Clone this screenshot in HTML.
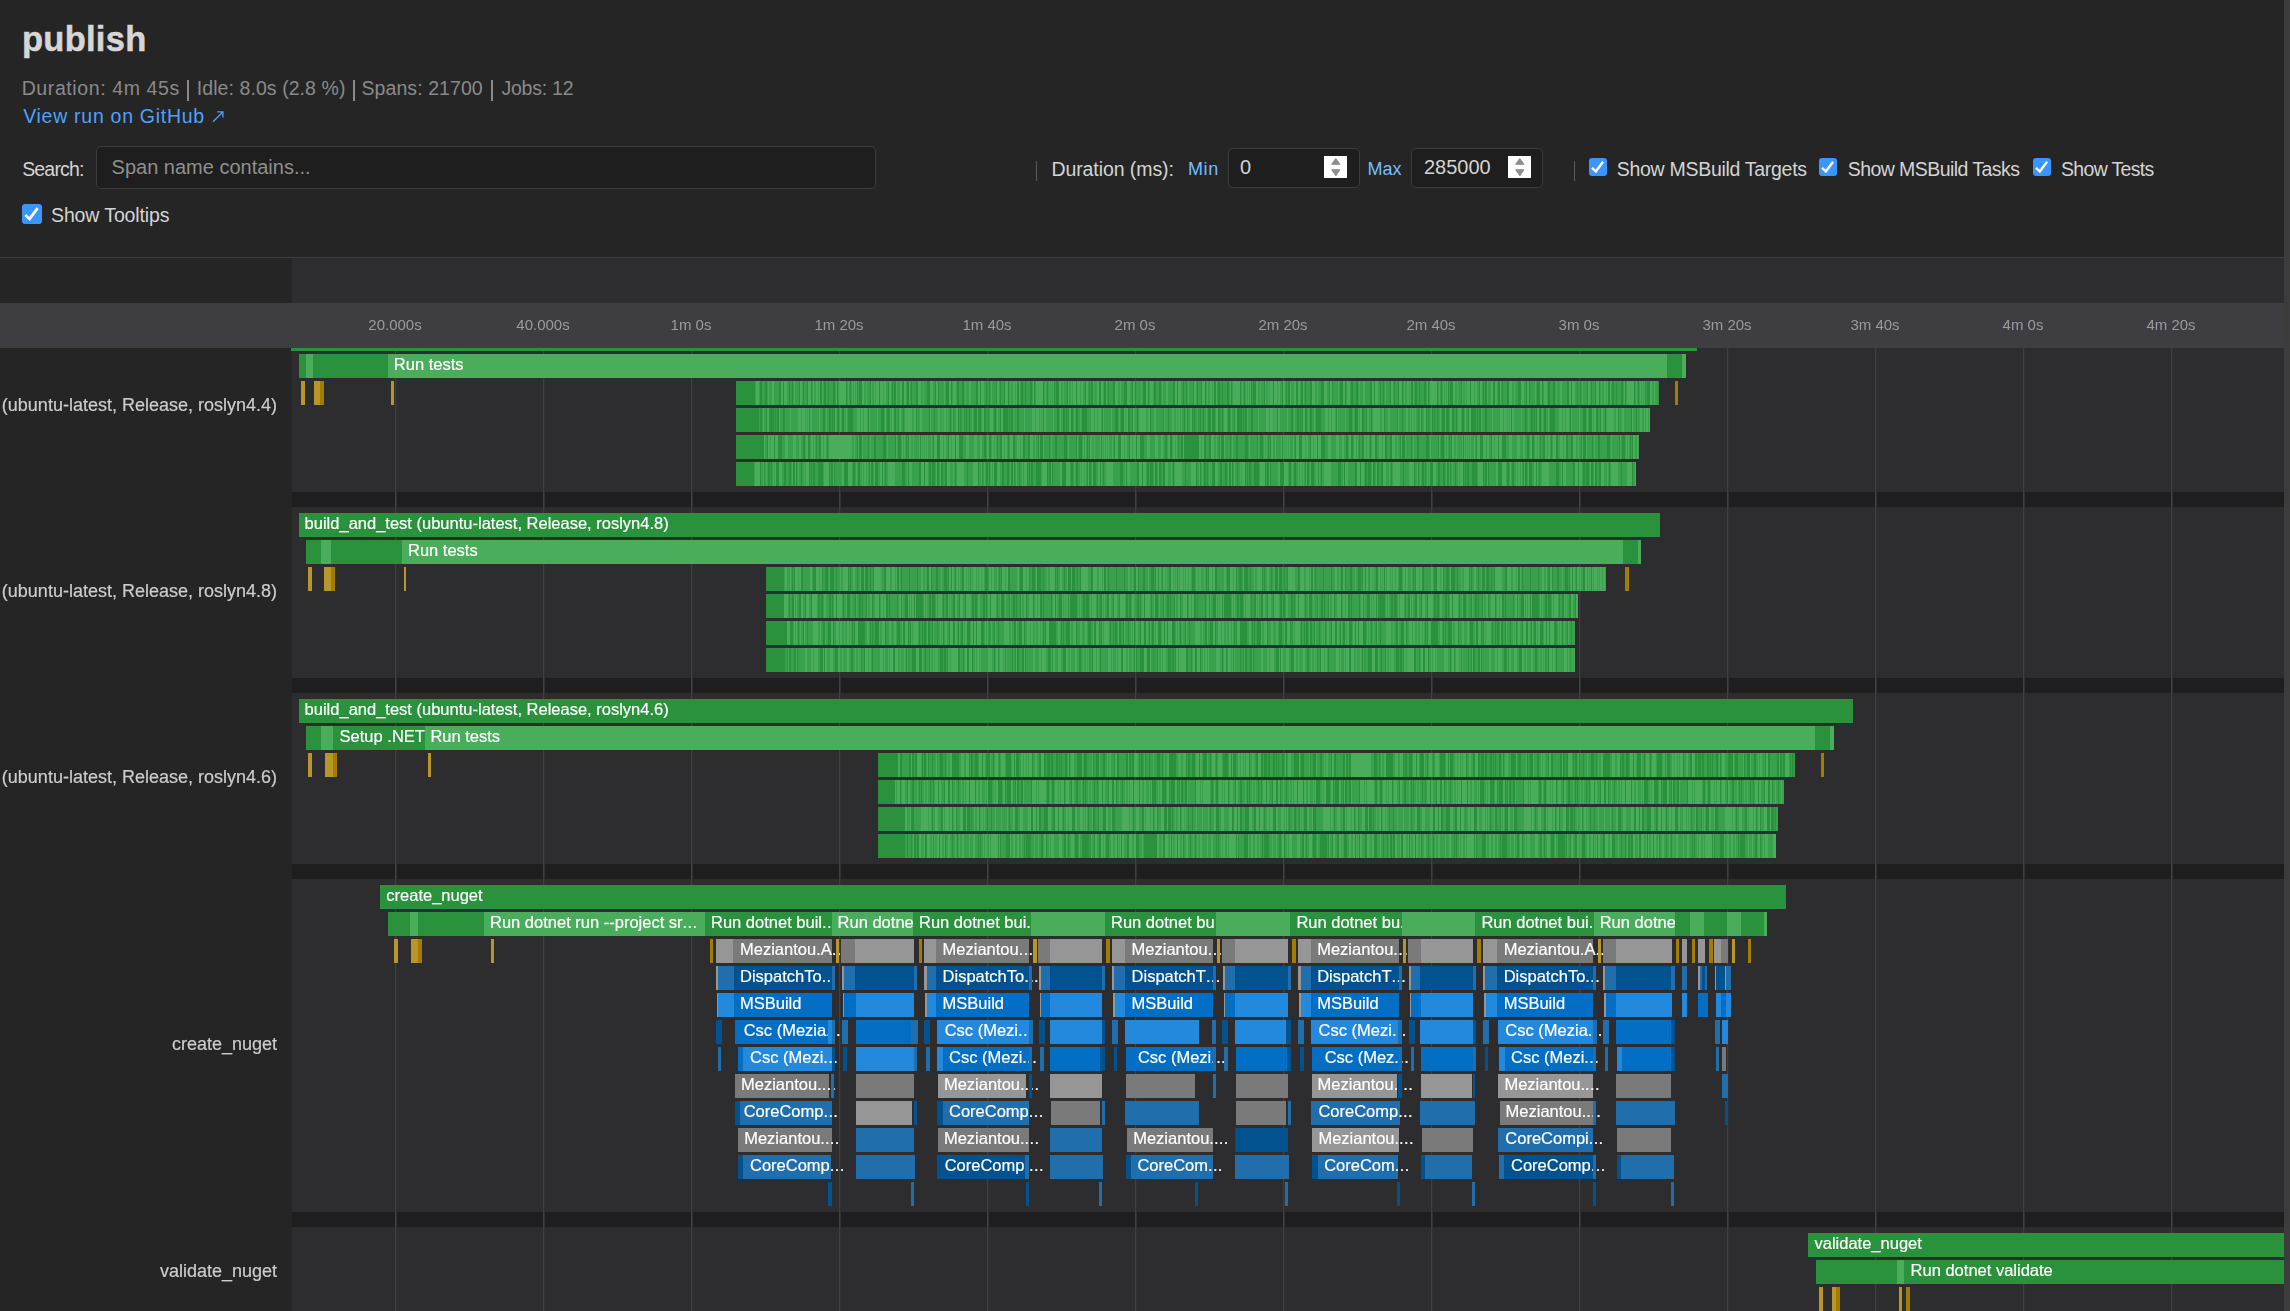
<!DOCTYPE html>
<html><head><meta charset="utf-8"><title>publish</title>
<style>

html,body{margin:0;padding:0}
html{background:#252526}
body{width:2290px;height:1311px;position:relative;background:#252526;
 font-family:"Liberation Sans",sans-serif;color:#d4d4d4}
#root{position:absolute;left:0;top:0;width:2290px;height:1311px;overflow:hidden;background:#252526}
.a{position:absolute;white-space:nowrap}
.t{position:absolute;white-space:nowrap;line-height:1;}
.b{position:absolute;height:24px}
.l{position:absolute;top:0;white-space:nowrap;color:#fff;font-size:16.5px;line-height:21px;height:24px;-webkit-text-stroke:0.2px #fff}
.l s{text-decoration:none;letter-spacing:0.35px}
.ax{position:absolute;top:303px;height:45px;line-height:44px;font-size:15px;color:#9b9b97;width:100px;text-align:center}
.g{position:absolute;top:348px;width:1px;height:963px;background:#3f3f44;box-shadow:1px 0 0 #313135}
.ll{position:absolute;right:2013px;white-space:nowrap;font-size:18px;color:#cccccc;line-height:20px;-webkit-text-stroke:0.2px #ccc}
.cb{position:absolute;background:#3a96ff;border-radius:3px}
.inp{position:absolute;box-sizing:border-box;background:#1e1e1e;border:1px solid #3c3c40;border-radius:5px}
.sp{position:absolute;background:#fdfdfd;width:23px;height:22px}

</style></head><body><div id="root">
<div class="t" id="h1" style="left:22.00px;top:22.10px;font-size:34.5px;color:#d6d6d6;font-weight:bold;letter-spacing:0.266px;-webkit-text-stroke:0.5px #d6d6d6">publish</div>
<div class="t" id="s1" style="left:21.70px;top:78.99px;font-size:19.5px;color:#8a8a8a;font-weight:normal;letter-spacing:0.600px">Duration: 4m 45s</div>
<div class="t" id="s2" style="left:196.80px;top:78.99px;font-size:19.5px;color:#8a8a8a;font-weight:normal;letter-spacing:0.071px">Idle: 8.0s (2.8 %)</div>
<div class="t" id="s3" style="left:361.50px;top:78.99px;font-size:19.5px;color:#8a8a8a;font-weight:normal;letter-spacing:0.072px">Spans: 21700</div>
<div class="t" id="s4" style="left:501.40px;top:78.99px;font-size:19.5px;color:#8a8a8a;font-weight:normal;letter-spacing:-0.229px">Jobs: 12</div>
<div class="t" id="lnk" style="left:23.20px;top:106.99px;font-size:19.5px;color:#4ea1ff;font-weight:normal;letter-spacing:0.717px">View run on GitHub</div>
<div class="t" id="srch" style="left:22.20px;top:159.79px;font-size:19.5px;color:#d4d4d4;font-weight:normal;letter-spacing:-0.833px">Search:</div>
<div class="t" id="tt" style="left:51.00px;top:206.09px;font-size:19.5px;color:#d4d4d4;font-weight:normal;letter-spacing:-0.117px">Show Tooltips</div>
<div class="t" id="dur" style="left:1051.40px;top:160.49px;font-size:19.5px;color:#d4d4d4;font-weight:normal;letter-spacing:-0.077px">Duration (ms):</div>
<div class="t" id="min" style="left:1187.90px;top:159.76px;font-size:18.0px;color:#75beff;font-weight:normal;letter-spacing:0.700px">Min</div>
<div class="t" id="max" style="left:1367.50px;top:159.76px;font-size:18.0px;color:#75beff;font-weight:normal;letter-spacing:0.000px">Max</div>
<div class="t" id="tg" style="left:1616.80px;top:160.29px;font-size:19.5px;color:#d4d4d4;font-weight:normal;letter-spacing:-0.294px">Show MSBuild Targets</div>
<div class="t" id="tk" style="left:1847.70px;top:160.29px;font-size:19.5px;color:#d4d4d4;font-weight:normal;letter-spacing:-0.553px">Show MSBuild Tasks</div>
<div class="t" id="ts" style="left:2061.00px;top:160.29px;font-size:19.5px;color:#d4d4d4;font-weight:normal;letter-spacing:-0.667px">Show Tests</div>
<div class="a" style="left:187.1px;top:79.5px;width:1.5px;height:21px;background:#8a8a8a"></div>
<div class="a" style="left:353.4px;top:79.5px;width:1.5px;height:21px;background:#8a8a8a"></div>
<div class="a" style="left:491.1px;top:79.5px;width:1.5px;height:21px;background:#8a8a8a"></div>
<svg class="a" style="left:210px;top:108px" width="18" height="18" viewBox="0 0 18 18"><path d="M3 13.8 L12.6 4.2 M7.2 3.9 H12.9 V9.6" stroke="#4ea1ff" stroke-width="1.3" fill="none"/></svg>
<div class="inp" style="left:96px;top:146px;width:780px;height:43px"></div>
<div class="t" id="ph" style="left:111.6px;top:156.57px;font-size:20px;color:#8f8f8f">Span name contains...</div>
<div class="a" style="left:1036px;top:161px;width:1px;height:20px;background:#5a5a5a"></div>
<div class="a" style="left:1574px;top:161px;width:1px;height:20px;background:#5a5a5a"></div>
<div class="inp" style="left:1228px;top:148px;width:132px;height:40px"></div>
<div class="inp" style="left:1411px;top:148px;width:132px;height:40px"></div>
<div class="t" style="left:1240px;top:157.07px;font-size:20px;color:#d4d4d4">0</div>
<div class="t" style="left:1424px;top:157.07px;font-size:20px;color:#d4d4d4">285000</div>
<div class="sp" style="left:1324px;top:156px"></div>
<svg class="a" style="left:1324px;top:156px" width="23" height="22" viewBox="0 0 23 22"><path d="M8 8.2 L11.8 2.9 L15.6 8.2 Z M8 13.8 L11.8 19.4 L15.6 13.8 Z" fill="#8c8c8c" stroke="#8c8c8c" stroke-width="1.2" stroke-linejoin="round"/></svg>
<div class="sp" style="left:1508px;top:156px"></div>
<svg class="a" style="left:1508px;top:156px" width="23" height="22" viewBox="0 0 23 22"><path d="M8 8.2 L11.8 2.9 L15.6 8.2 Z M8 13.8 L11.8 19.4 L15.6 13.8 Z" fill="#8c8c8c" stroke="#8c8c8c" stroke-width="1.2" stroke-linejoin="round"/></svg>
<div class="cb" style="left:22px;top:204px;width:20px;height:20px"></div>
<svg class="a" style="left:22px;top:204px" width="20" height="20" viewBox="0 0 20 20"><path d="M3.3 10.9 L7.6 14.9 L15.6 4.1" stroke="#fff" stroke-width="2.7" fill="none"/></svg>
<div class="cb" style="left:1589px;top:158px;width:18px;height:18px"></div>
<svg class="a" style="left:1589px;top:158px" width="18" height="18" viewBox="0 0 20 20"><path d="M3.3 10.9 L7.6 14.9 L15.6 4.1" stroke="#fff" stroke-width="2.7" fill="none"/></svg>
<div class="cb" style="left:1819px;top:158px;width:18px;height:18px"></div>
<svg class="a" style="left:1819px;top:158px" width="18" height="18" viewBox="0 0 20 20"><path d="M3.3 10.9 L7.6 14.9 L15.6 4.1" stroke="#fff" stroke-width="2.7" fill="none"/></svg>
<div class="cb" style="left:2033px;top:158px;width:18px;height:18px"></div>
<svg class="a" style="left:2033px;top:158px" width="18" height="18" viewBox="0 0 20 20"><path d="M3.3 10.9 L7.6 14.9 L15.6 4.1" stroke="#fff" stroke-width="2.7" fill="none"/></svg>
<div class="a" style="left:0;top:257px;width:2284px;height:1px;background:#3e3e42"></div>
<div class="a" style="left:292px;top:258px;width:1992px;height:1053px;background:#2d2d30"></div>
<div class="a" style="left:0;top:303px;width:2284px;height:45px;background:#3e3e42"></div>
<div class="a" style="left:292px;top:492px;width:1992px;height:15px;background:#1e1e1e"></div>
<div class="a" style="left:292px;top:678px;width:1992px;height:15px;background:#1e1e1e"></div>
<div class="a" style="left:292px;top:864px;width:1992px;height:15px;background:#1e1e1e"></div>
<div class="a" style="left:292px;top:1212px;width:1992px;height:15px;background:#1e1e1e"></div>
<div class="g" style="left:395px"></div>
<div class="g" style="left:543px"></div>
<div class="g" style="left:691px"></div>
<div class="g" style="left:839px"></div>
<div class="g" style="left:987px"></div>
<div class="g" style="left:1135px"></div>
<div class="g" style="left:1283px"></div>
<div class="g" style="left:1431px"></div>
<div class="g" style="left:1579px"></div>
<div class="g" style="left:1727px"></div>
<div class="g" style="left:1875px"></div>
<div class="g" style="left:2023px"></div>
<div class="g" style="left:2171px"></div>
<div style="position:absolute;left:0;top:0;width:2290px;height:1311px;will-change:transform">
<div class="ax" style="left:345px">20.000s</div>
<div class="ax" style="left:493px">40.000s</div>
<div class="ax" style="left:641px">1m 0s</div>
<div class="ax" style="left:789px">1m 20s</div>
<div class="ax" style="left:937px">1m 40s</div>
<div class="ax" style="left:1085px">2m 0s</div>
<div class="ax" style="left:1233px">2m 20s</div>
<div class="ax" style="left:1381px">2m 40s</div>
<div class="ax" style="left:1529px">3m 0s</div>
<div class="ax" style="left:1677px">3m 20s</div>
<div class="ax" style="left:1825px">3m 40s</div>
<div class="ax" style="left:1973px">4m 0s</div>
<div class="ax" style="left:2121px">4m 20s</div>
<div class="a" style="left:2284px;top:0;width:6px;height:1311px;background:#3c3c3d"></div>
<div class="ll" style="top:394.5px">(ubuntu-latest, Release, roslyn4.4)</div>
<div class="ll" style="top:581.4px">(ubuntu-latest, Release, roslyn4.8)</div>
<div class="ll" style="top:767.4px">(ubuntu-latest, Release, roslyn4.6)</div>
<div class="ll" style="top:1034.3px">create_nuget</div>
<div class="ll" style="top:1260.9px">validate_nuget</div>
</div>
<div id="bars" style="position:absolute;left:0;top:0;width:2290px;height:1311px;will-change:transform">
<div class="b" style="left:299px;top:354px;width:7px;background:#2a923d"></div>
<div class="b" style="left:306px;top:354px;width:7px;background:#4aad5c"></div>
<div class="b" style="left:313px;top:354px;width:75px;background:#2a923d"></div>
<div class="b" style="left:388px;top:354px;width:1279px;background:#4aad5c"><span class="l" style="left:5.8px">Run tests</span></div>
<div class="b" style="left:1667px;top:354px;width:15px;background:#2a923d"></div>
<div class="b" style="left:1682px;top:354px;width:4px;background:#4aad5c"></div>
<div class="b" style="left:301px;top:381px;width:4px;background:#b8962a"></div>
<div class="b" style="left:314px;top:381px;width:6px;background:#b8962a"></div>
<div class="b" style="left:320px;top:381px;width:4px;background:#a27d00"></div>
<div class="b" style="left:391px;top:381px;width:3px;background:#b8962a"></div>
<div class="b" style="left:736px;top:381px;width:19px;background:#2a923d"></div>
<div class="b" style="left:755px;top:381px;width:904px;background:repeating-linear-gradient(90deg,#39a04c 0px,#39a04c 1px,#4aad5c 1px,#4aad5c 4px,#39a04c 4px,#39a04c 5px,#2a923d 5px,#2a923d 7px,#39a04c 7px,#39a04c 10px,#2a923d 10px,#2a923d 12px,#39a04c 12px,#39a04c 13px,#4aad5c 13px,#4aad5c 14px,#39a04c 14px,#39a04c 17px,#4aad5c 17px,#4aad5c 19px,#39a04c 19px,#39a04c 24px,#2a923d 24px,#2a923d 26px,#4aad5c 26px,#4aad5c 28px,#2a923d 28px,#2a923d 29px,#4aad5c 29px,#4aad5c 32px,#39a04c 32px,#39a04c 34px,#2a923d 34px,#2a923d 35px,#39a04c 35px,#39a04c 37px,#2a923d 37px,#2a923d 38px,#39a04c 38px,#39a04c 39px,#4aad5c 39px,#4aad5c 40px,#39a04c 40px,#39a04c 44px,#2a923d 44px,#2a923d 45px,#4aad5c 45px,#4aad5c 47px,#39a04c 47px,#39a04c 48px,#2a923d 48px,#2a923d 49px,#39a04c 49px,#39a04c 52px,#2a923d 52px,#2a923d 53px,#4aad5c 53px,#4aad5c 56px,#2a923d 56px,#2a923d 57px,#39a04c 57px,#39a04c 58px,#4aad5c 58px,#4aad5c 59px,#39a04c 59px,#39a04c 61px,#4aad5c 61px,#4aad5c 63px,#39a04c 63px,#39a04c 64px,#4aad5c 64px,#4aad5c 65px,#2a923d 65px,#2a923d 67px,#4aad5c 67px,#4aad5c 68px,#39a04c 68px,#39a04c 69px,#2a923d 69px,#2a923d 71px,#39a04c 71px,#39a04c 73px,#2a923d 73px,#2a923d 74px,#39a04c 74px,#39a04c 78px,#2a923d 78px,#2a923d 80px,#39a04c 80px,#39a04c 81px,#4aad5c 81px,#4aad5c 82px,#2a923d 82px,#2a923d 83px,#39a04c 83px,#39a04c 84px,#4aad5c 84px,#4aad5c 91px,#2a923d 91px,#2a923d 92px,#39a04c 92px,#39a04c 93px,#4aad5c 93px,#4aad5c 94px,#39a04c 94px,#39a04c 95px,#2a923d 95px,#2a923d 96px,#39a04c 96px,#39a04c 97px,#4aad5c 97px,#4aad5c 98px,#39a04c 98px,#39a04c 99px,#4aad5c 99px,#4aad5c 100px,#39a04c 100px,#39a04c 101px,#4aad5c 101px,#4aad5c 102px,#2a923d 102px,#2a923d 103px,#39a04c 103px,#39a04c 104px,#2a923d 104px,#2a923d 107px,#4aad5c 107px,#4aad5c 109px,#39a04c 109px,#39a04c 111px,#4aad5c 111px,#4aad5c 112px,#39a04c 112px,#39a04c 115px,#2a923d 115px,#2a923d 116px,#4aad5c 116px,#4aad5c 117px,#39a04c 117px,#39a04c 119px,#4aad5c 119px,#4aad5c 120px,#39a04c 120px,#39a04c 121px,#4aad5c 121px,#4aad5c 124px,#2a923d 124px,#2a923d 125px,#4aad5c 125px,#4aad5c 128px,#39a04c 128px,#39a04c 129px,#4aad5c 129px,#4aad5c 131px,#39a04c 131px,#39a04c 133px,#2a923d 133px,#2a923d 134px,#4aad5c 134px,#4aad5c 136px,#39a04c 136px,#39a04c 137px,#2a923d 137px,#2a923d 138px,#39a04c 138px,#39a04c 139px,#2a923d 139px,#2a923d 141px,#4aad5c 141px,#4aad5c 142px,#39a04c 142px,#39a04c 145px,#4aad5c 145px,#4aad5c 147px,#2a923d 147px,#2a923d 149px,#4aad5c 149px,#4aad5c 151px,#39a04c 151px,#39a04c 152px,#2a923d 152px,#2a923d 154px,#4aad5c 154px,#4aad5c 155px,#39a04c 155px,#39a04c 156px,#2a923d 156px,#2a923d 157px,#39a04c 157px,#39a04c 161px,#2a923d 161px,#2a923d 163px,#4aad5c 163px,#4aad5c 166px,#39a04c 166px,#39a04c 168px,#4aad5c 168px,#4aad5c 169px,#39a04c 169px,#39a04c 172px,#2a923d 172px,#2a923d 175px,#4aad5c 175px,#4aad5c 178px,#39a04c 178px,#39a04c 180px,#2a923d 180px,#2a923d 181px,#4aad5c 181px,#4aad5c 183px,#2a923d 183px,#2a923d 184px,#39a04c 184px,#39a04c 189px,#4aad5c 189px,#4aad5c 190px,#39a04c 190px,#39a04c 191px,#2a923d 191px,#2a923d 194px,#4aad5c 194px,#4aad5c 196px,#2a923d 196px,#2a923d 197px)"></div>
<div class="b" style="left:1675px;top:381px;width:3px;background:#a27d00"></div>
<div class="b" style="left:736px;top:408px;width:23px;background:#2a923d"></div>
<div class="b" style="left:759px;top:408px;width:891px;background:repeating-linear-gradient(90deg,#39a04c 0px,#39a04c 1px,#2a923d 1px,#2a923d 3px,#39a04c 3px,#39a04c 4px,#4aad5c 4px,#4aad5c 5px,#39a04c 5px,#39a04c 7px,#2a923d 7px,#2a923d 8px,#4aad5c 8px,#4aad5c 10px,#2a923d 10px,#2a923d 15px,#39a04c 15px,#39a04c 16px,#2a923d 16px,#2a923d 17px,#39a04c 17px,#39a04c 18px,#2a923d 18px,#2a923d 20px,#4aad5c 20px,#4aad5c 21px,#39a04c 21px,#39a04c 24px,#2a923d 24px,#2a923d 26px,#39a04c 26px,#39a04c 31px,#4aad5c 31px,#4aad5c 32px,#39a04c 32px,#39a04c 39px,#4aad5c 39px,#4aad5c 42px,#39a04c 42px,#39a04c 43px,#4aad5c 43px,#4aad5c 46px,#39a04c 46px,#39a04c 47px,#4aad5c 47px,#4aad5c 48px,#39a04c 48px,#39a04c 49px,#4aad5c 49px,#4aad5c 50px,#2a923d 50px,#2a923d 51px,#4aad5c 51px,#4aad5c 53px,#39a04c 53px,#39a04c 60px,#4aad5c 60px,#4aad5c 61px,#39a04c 61px,#39a04c 64px,#2a923d 64px,#2a923d 66px,#39a04c 66px,#39a04c 67px,#4aad5c 67px,#4aad5c 68px,#39a04c 68px,#39a04c 70px,#2a923d 70px,#2a923d 72px,#39a04c 72px,#39a04c 73px,#2a923d 73px,#2a923d 74px,#39a04c 74px,#39a04c 75px,#2a923d 75px,#2a923d 76px,#4aad5c 76px,#4aad5c 78px,#2a923d 78px,#2a923d 80px,#39a04c 80px,#39a04c 81px,#4aad5c 81px,#4aad5c 82px,#39a04c 82px,#39a04c 83px,#2a923d 83px,#2a923d 85px,#39a04c 85px,#39a04c 87px,#4aad5c 87px,#4aad5c 88px,#39a04c 88px,#39a04c 89px,#2a923d 89px,#2a923d 94px,#39a04c 94px,#39a04c 98px,#4aad5c 98px,#4aad5c 101px,#39a04c 101px,#39a04c 102px,#4aad5c 102px,#4aad5c 104px,#39a04c 104px,#39a04c 105px,#4aad5c 105px,#4aad5c 108px,#39a04c 108px,#39a04c 109px,#2a923d 109px,#2a923d 110px,#4aad5c 110px,#4aad5c 111px,#39a04c 111px,#39a04c 118px,#4aad5c 118px,#4aad5c 119px,#39a04c 119px,#39a04c 122px,#2a923d 122px,#2a923d 125px,#39a04c 125px,#39a04c 126px,#4aad5c 126px,#4aad5c 127px,#39a04c 127px,#39a04c 128px,#2a923d 128px,#2a923d 131px,#4aad5c 131px,#4aad5c 132px,#39a04c 132px,#39a04c 133px,#4aad5c 133px,#4aad5c 135px,#2a923d 135px,#2a923d 137px,#39a04c 137px,#39a04c 139px,#2a923d 139px,#2a923d 140px,#4aad5c 140px,#4aad5c 142px,#39a04c 142px,#39a04c 144px,#2a923d 144px,#2a923d 145px,#39a04c 145px,#39a04c 146px,#4aad5c 146px,#4aad5c 153px,#39a04c 153px,#39a04c 155px,#4aad5c 155px,#4aad5c 157px,#2a923d 157px,#2a923d 158px,#39a04c 158px,#39a04c 161px,#4aad5c 161px,#4aad5c 163px,#39a04c 163px,#39a04c 170px,#2a923d 170px,#2a923d 171px,#4aad5c 171px,#4aad5c 172px,#39a04c 172px,#39a04c 175px,#2a923d 175px,#2a923d 176px,#39a04c 176px,#39a04c 179px,#4aad5c 179px,#4aad5c 181px,#39a04c 181px,#39a04c 183px,#4aad5c 183px,#4aad5c 184px,#39a04c 184px,#39a04c 185px,#4aad5c 185px,#4aad5c 187px,#39a04c 187px,#39a04c 188px,#4aad5c 188px,#4aad5c 189px,#39a04c 189px,#39a04c 191px,#2a923d 191px,#2a923d 192px,#39a04c 192px,#39a04c 193px,#4aad5c 193px,#4aad5c 194px,#2a923d 194px,#2a923d 195px,#39a04c 195px,#39a04c 197px,#4aad5c 197px,#4aad5c 199px,#2a923d 199px,#2a923d 200px,#39a04c 200px,#39a04c 201px,#2a923d 201px,#2a923d 202px,#39a04c 202px,#39a04c 204px,#4aad5c 204px,#4aad5c 205px,#2a923d 205px,#2a923d 206px,#39a04c 206px,#39a04c 207px,#2a923d 207px,#2a923d 208px,#39a04c 208px,#39a04c 210px,#2a923d 210px,#2a923d 211px,#39a04c 211px,#39a04c 213px,#4aad5c 213px,#4aad5c 214px,#39a04c 214px,#39a04c 215px,#2a923d 215px,#2a923d 218px,#4aad5c 218px,#4aad5c 219px,#2a923d 219px,#2a923d 222px,#39a04c 222px,#39a04c 223px,#4aad5c 223px,#4aad5c 225px,#2a923d 225px,#2a923d 227px,#39a04c 227px,#39a04c 229px,#2a923d 229px,#2a923d 230px,#39a04c 230px,#39a04c 231px,#4aad5c 231px,#4aad5c 234px)"></div>
<div class="b" style="left:736px;top:435px;width:28px;background:#2a923d"></div>
<div class="b" style="left:764px;top:435px;width:875px;background:repeating-linear-gradient(90deg,#4aad5c 0px,#4aad5c 1px,#39a04c 1px,#39a04c 3px,#2a923d 3px,#2a923d 4px,#4aad5c 4px,#4aad5c 6px,#39a04c 6px,#39a04c 7px,#4aad5c 7px,#4aad5c 10px,#2a923d 10px,#2a923d 11px,#4aad5c 11px,#4aad5c 14px,#2a923d 14px,#2a923d 18px,#39a04c 18px,#39a04c 21px,#4aad5c 21px,#4aad5c 24px,#39a04c 24px,#39a04c 29px,#4aad5c 29px,#4aad5c 32px,#39a04c 32px,#39a04c 35px,#4aad5c 35px,#4aad5c 37px,#39a04c 37px,#39a04c 39px,#2a923d 39px,#2a923d 41px,#39a04c 41px,#39a04c 42px,#4aad5c 42px,#4aad5c 44px,#2a923d 44px,#2a923d 46px,#39a04c 46px,#39a04c 47px,#4aad5c 47px,#4aad5c 49px,#39a04c 49px,#39a04c 50px,#4aad5c 50px,#4aad5c 51px,#39a04c 51px,#39a04c 52px,#2a923d 52px,#2a923d 53px,#39a04c 53px,#39a04c 55px,#2a923d 55px,#2a923d 57px,#4aad5c 57px,#4aad5c 59px,#39a04c 59px,#39a04c 60px,#4aad5c 60px,#4aad5c 62px,#39a04c 62px,#39a04c 63px,#2a923d 63px,#2a923d 64px,#39a04c 64px,#39a04c 65px,#4aad5c 65px,#4aad5c 68px,#2a923d 68px,#2a923d 70px,#39a04c 70px,#39a04c 72px,#4aad5c 72px,#4aad5c 75px,#39a04c 75px,#39a04c 76px,#4aad5c 76px,#4aad5c 78px,#2a923d 78px,#2a923d 80px,#39a04c 80px,#39a04c 83px,#2a923d 83px,#2a923d 85px,#4aad5c 85px,#4aad5c 88px,#39a04c 88px,#39a04c 90px,#4aad5c 90px,#4aad5c 91px,#39a04c 91px,#39a04c 93px,#2a923d 93px,#2a923d 94px,#4aad5c 94px,#4aad5c 95px,#2a923d 95px,#2a923d 98px,#4aad5c 98px,#4aad5c 99px,#39a04c 99px,#39a04c 104px,#2a923d 104px,#2a923d 105px,#39a04c 105px,#39a04c 106px,#4aad5c 106px,#4aad5c 107px,#39a04c 107px,#39a04c 110px,#2a923d 110px,#2a923d 112px,#39a04c 112px,#39a04c 119px,#2a923d 119px,#2a923d 122px,#39a04c 122px,#39a04c 123px,#4aad5c 123px,#4aad5c 124px,#39a04c 124px,#39a04c 131px,#2a923d 131px,#2a923d 132px,#4aad5c 132px,#4aad5c 133px,#39a04c 133px,#39a04c 134px,#2a923d 134px,#2a923d 137px,#39a04c 137px,#39a04c 138px,#4aad5c 138px,#4aad5c 139px,#39a04c 139px,#39a04c 140px,#4aad5c 140px,#4aad5c 141px,#39a04c 141px,#39a04c 142px,#2a923d 142px,#2a923d 143px,#39a04c 143px,#39a04c 144px,#2a923d 144px,#2a923d 145px,#4aad5c 145px,#4aad5c 147px,#39a04c 147px,#39a04c 149px,#4aad5c 149px,#4aad5c 150px,#39a04c 150px,#39a04c 155px,#4aad5c 155px,#4aad5c 156px,#2a923d 156px,#2a923d 157px,#4aad5c 157px,#4aad5c 158px,#39a04c 158px,#39a04c 159px,#4aad5c 159px,#4aad5c 160px,#39a04c 160px,#39a04c 161px,#4aad5c 161px,#4aad5c 162px,#39a04c 162px,#39a04c 163px,#4aad5c 163px,#4aad5c 164px,#39a04c 164px,#39a04c 167px,#4aad5c 167px,#4aad5c 168px,#39a04c 168px,#39a04c 169px,#2a923d 169px,#2a923d 170px,#4aad5c 170px,#4aad5c 173px,#2a923d 173px,#2a923d 176px,#4aad5c 176px,#4aad5c 179px,#39a04c 179px,#39a04c 180px,#4aad5c 180px,#4aad5c 181px)"></div>
<div class="b" style="left:829px;top:435px;width:20px;background:#4aad5c"></div>
<div class="b" style="left:1184px;top:435px;width:15px;background:#2a923d"></div>
<div class="b" style="left:736px;top:462px;width:18px;background:#2a923d"></div>
<div class="b" style="left:754px;top:462px;width:882px;background:repeating-linear-gradient(90deg,#39a04c 0px,#39a04c 1px,#4aad5c 1px,#4aad5c 6px,#2a923d 6px,#2a923d 7px,#39a04c 7px,#39a04c 9px,#4aad5c 9px,#4aad5c 10px,#2a923d 10px,#2a923d 11px,#39a04c 11px,#39a04c 12px,#4aad5c 12px,#4aad5c 13px,#39a04c 13px,#39a04c 14px,#2a923d 14px,#2a923d 16px,#39a04c 16px,#39a04c 17px,#2a923d 17px,#2a923d 18px,#39a04c 18px,#39a04c 19px,#4aad5c 19px,#4aad5c 20px,#39a04c 20px,#39a04c 21px,#4aad5c 21px,#4aad5c 22px,#2a923d 22px,#2a923d 25px,#4aad5c 25px,#4aad5c 28px,#39a04c 28px,#39a04c 30px,#2a923d 30px,#2a923d 32px,#39a04c 32px,#39a04c 35px,#2a923d 35px,#2a923d 37px,#39a04c 37px,#39a04c 38px,#4aad5c 38px,#4aad5c 39px,#2a923d 39px,#2a923d 41px,#4aad5c 41px,#4aad5c 42px,#2a923d 42px,#2a923d 43px,#39a04c 43px,#39a04c 44px,#4aad5c 44px,#4aad5c 45px,#39a04c 45px,#39a04c 47px,#2a923d 47px,#2a923d 48px,#39a04c 48px,#39a04c 50px,#4aad5c 50px,#4aad5c 51px,#39a04c 51px,#39a04c 52px,#4aad5c 52px,#4aad5c 55px,#2a923d 55px,#2a923d 56px,#39a04c 56px,#39a04c 57px,#2a923d 57px,#2a923d 58px,#39a04c 58px,#39a04c 59px,#2a923d 59px,#2a923d 61px,#39a04c 61px,#39a04c 64px,#2a923d 64px,#2a923d 69px,#39a04c 69px,#39a04c 70px,#4aad5c 70px,#4aad5c 75px,#2a923d 75px,#2a923d 76px,#39a04c 76px,#39a04c 77px,#2a923d 77px,#2a923d 79px,#4aad5c 79px,#4aad5c 80px,#2a923d 80px,#2a923d 81px,#39a04c 81px,#39a04c 88px,#4aad5c 88px,#4aad5c 90px,#2a923d 90px,#2a923d 94px,#4aad5c 94px,#4aad5c 98px,#39a04c 98px,#39a04c 99px,#2a923d 99px,#2a923d 101px,#39a04c 101px,#39a04c 102px,#4aad5c 102px,#4aad5c 103px,#39a04c 103px,#39a04c 104px,#2a923d 104px,#2a923d 106px,#39a04c 106px,#39a04c 108px,#4aad5c 108px,#4aad5c 109px,#39a04c 109px,#39a04c 110px,#4aad5c 110px,#4aad5c 112px,#39a04c 112px,#39a04c 113px,#4aad5c 113px,#4aad5c 114px,#39a04c 114px,#39a04c 115px,#2a923d 115px,#2a923d 116px,#4aad5c 116px,#4aad5c 117px,#2a923d 117px,#2a923d 119px,#39a04c 119px,#39a04c 120px,#4aad5c 120px,#4aad5c 121px,#2a923d 121px,#2a923d 124px,#39a04c 124px,#39a04c 126px,#4aad5c 126px,#4aad5c 128px,#2a923d 128px,#2a923d 129px,#4aad5c 129px,#4aad5c 130px,#39a04c 130px,#39a04c 131px,#2a923d 131px,#2a923d 132px,#39a04c 132px,#39a04c 134px,#4aad5c 134px,#4aad5c 141px,#39a04c 141px,#39a04c 148px,#2a923d 148px,#2a923d 151px,#39a04c 151px,#39a04c 153px,#4aad5c 153px,#4aad5c 154px,#2a923d 154px,#2a923d 155px,#4aad5c 155px,#4aad5c 158px,#39a04c 158px,#39a04c 165px,#2a923d 165px,#2a923d 167px,#4aad5c 167px,#4aad5c 170px,#2a923d 170px,#2a923d 171px,#4aad5c 171px,#4aad5c 174px,#39a04c 174px,#39a04c 175px,#2a923d 175px,#2a923d 177px,#39a04c 177px,#39a04c 178px,#2a923d 178px,#2a923d 181px,#39a04c 181px,#39a04c 182px,#4aad5c 182px,#4aad5c 183px,#2a923d 183px,#2a923d 185px,#39a04c 185px,#39a04c 186px,#4aad5c 186px,#4aad5c 187px,#2a923d 187px,#2a923d 189px,#39a04c 189px,#39a04c 191px,#2a923d 191px,#2a923d 193px,#4aad5c 193px,#4aad5c 196px,#39a04c 196px,#39a04c 199px,#4aad5c 199px,#4aad5c 200px,#39a04c 200px,#39a04c 201px,#2a923d 201px,#2a923d 202px,#39a04c 202px,#39a04c 203px,#4aad5c 203px,#4aad5c 210px,#39a04c 210px,#39a04c 213px,#2a923d 213px,#2a923d 214px,#39a04c 214px,#39a04c 218px)"></div>
<div class="b" style="left:299px;top:513px;width:1361px;background:#2a923d"><span class="l" style="left:5.6px">build_and_test (ubuntu-latest, Release, roslyn4.8)</span></div>
<div class="b" style="left:306px;top:540px;width:15px;background:#2a923d"></div>
<div class="b" style="left:321px;top:540px;width:10px;background:#4aad5c"></div>
<div class="b" style="left:331px;top:540px;width:71px;background:#2a923d"></div>
<div class="b" style="left:402px;top:540px;width:1221px;background:#4aad5c"><span class="l" style="left:6px">Run tests</span></div>
<div class="b" style="left:1623px;top:540px;width:15px;background:#2a923d"></div>
<div class="b" style="left:1638px;top:540px;width:3px;background:#4aad5c"></div>
<div class="b" style="left:308px;top:567px;width:4px;background:#b8962a"></div>
<div class="b" style="left:324px;top:567px;width:7px;background:#b8962a"></div>
<div class="b" style="left:331px;top:567px;width:4px;background:#a27d00"></div>
<div class="b" style="left:404px;top:567px;width:2px;background:#b8962a"></div>
<div class="b" style="left:766px;top:567px;width:18px;background:#2a923d"></div>
<div class="b" style="left:784px;top:567px;width:822px;background:repeating-linear-gradient(90deg,#39a04c 0px,#39a04c 1px,#4aad5c 1px,#4aad5c 3px,#39a04c 3px,#39a04c 6px,#4aad5c 6px,#4aad5c 7px,#39a04c 7px,#39a04c 8px,#2a923d 8px,#2a923d 9px,#39a04c 9px,#39a04c 10px,#2a923d 10px,#2a923d 11px,#4aad5c 11px,#4aad5c 14px,#39a04c 14px,#39a04c 15px,#4aad5c 15px,#4aad5c 17px,#2a923d 17px,#2a923d 19px,#39a04c 19px,#39a04c 26px,#4aad5c 26px,#4aad5c 28px,#39a04c 28px,#39a04c 29px,#2a923d 29px,#2a923d 32px,#4aad5c 32px,#4aad5c 35px,#39a04c 35px,#39a04c 36px,#4aad5c 36px,#4aad5c 38px,#2a923d 38px,#2a923d 39px,#39a04c 39px,#39a04c 41px,#2a923d 41px,#2a923d 44px,#39a04c 44px,#39a04c 45px,#4aad5c 45px,#4aad5c 46px,#2a923d 46px,#2a923d 50px,#39a04c 50px,#39a04c 52px,#2a923d 52px,#2a923d 53px,#39a04c 53px,#39a04c 56px,#4aad5c 56px,#4aad5c 57px,#39a04c 57px,#39a04c 59px,#4aad5c 59px,#4aad5c 64px,#2a923d 64px,#2a923d 65px,#39a04c 65px,#39a04c 66px,#2a923d 66px,#2a923d 67px,#39a04c 67px,#39a04c 69px,#4aad5c 69px,#4aad5c 71px,#39a04c 71px,#39a04c 73px,#2a923d 73px,#2a923d 74px,#39a04c 74px,#39a04c 76px,#4aad5c 76px,#4aad5c 77px,#2a923d 77px,#2a923d 80px,#4aad5c 80px,#4aad5c 81px,#2a923d 81px,#2a923d 84px,#39a04c 84px,#39a04c 86px,#2a923d 86px,#2a923d 87px,#39a04c 87px,#39a04c 89px,#2a923d 89px,#2a923d 90px,#4aad5c 90px,#4aad5c 97px,#39a04c 97px,#39a04c 100px,#2a923d 100px,#2a923d 102px,#4aad5c 102px,#4aad5c 106px,#39a04c 106px,#39a04c 108px,#4aad5c 108px,#4aad5c 111px,#39a04c 111px,#39a04c 112px,#4aad5c 112px,#4aad5c 113px,#2a923d 113px,#2a923d 115px,#4aad5c 115px,#4aad5c 116px,#39a04c 116px,#39a04c 117px,#2a923d 117px,#2a923d 118px,#39a04c 118px,#39a04c 125px,#2a923d 125px,#2a923d 126px,#39a04c 126px,#39a04c 133px,#2a923d 133px,#2a923d 134px,#39a04c 134px,#39a04c 137px,#4aad5c 137px,#4aad5c 139px,#39a04c 139px,#39a04c 141px,#4aad5c 141px,#4aad5c 142px,#39a04c 142px,#39a04c 143px,#2a923d 143px,#2a923d 145px,#4aad5c 145px,#4aad5c 147px,#2a923d 147px,#2a923d 148px,#39a04c 148px,#39a04c 152px,#2a923d 152px,#2a923d 154px,#39a04c 154px,#39a04c 157px,#4aad5c 157px,#4aad5c 158px,#39a04c 158px,#39a04c 160px,#2a923d 160px,#2a923d 163px,#39a04c 163px,#39a04c 164px,#2a923d 164px,#2a923d 165px,#4aad5c 165px,#4aad5c 167px,#2a923d 167px,#2a923d 168px,#4aad5c 168px,#4aad5c 170px,#39a04c 170px,#39a04c 171px,#2a923d 171px,#2a923d 172px,#4aad5c 172px,#4aad5c 174px,#39a04c 174px,#39a04c 175px,#4aad5c 175px,#4aad5c 176px,#39a04c 176px,#39a04c 178px,#2a923d 178px,#2a923d 180px,#4aad5c 180px,#4aad5c 182px,#39a04c 182px,#39a04c 183px,#4aad5c 183px,#4aad5c 184px,#39a04c 184px,#39a04c 185px,#4aad5c 185px,#4aad5c 186px,#2a923d 186px,#2a923d 187px,#4aad5c 187px,#4aad5c 188px,#39a04c 188px,#39a04c 189px,#4aad5c 189px,#4aad5c 192px,#39a04c 192px,#39a04c 193px,#4aad5c 193px,#4aad5c 194px,#39a04c 194px,#39a04c 195px,#4aad5c 195px,#4aad5c 197px,#39a04c 197px,#39a04c 198px,#4aad5c 198px,#4aad5c 200px,#39a04c 200px,#39a04c 201px,#2a923d 201px,#2a923d 204px,#39a04c 204px,#39a04c 205px,#4aad5c 205px,#4aad5c 207px)"></div>
<div class="b" style="left:1625px;top:567px;width:4px;background:#a27d00"></div>
<div class="b" style="left:766px;top:594px;width:18px;background:#2a923d"></div>
<div class="b" style="left:784px;top:594px;width:794px;background:repeating-linear-gradient(90deg,#4aad5c 0px,#4aad5c 4px,#39a04c 4px,#39a04c 5px,#2a923d 5px,#2a923d 6px,#39a04c 6px,#39a04c 8px,#2a923d 8px,#2a923d 10px,#4aad5c 10px,#4aad5c 11px,#39a04c 11px,#39a04c 12px,#4aad5c 12px,#4aad5c 13px,#39a04c 13px,#39a04c 15px,#2a923d 15px,#2a923d 17px,#4aad5c 17px,#4aad5c 19px,#39a04c 19px,#39a04c 21px,#2a923d 21px,#2a923d 22px,#4aad5c 22px,#4aad5c 25px,#39a04c 25px,#39a04c 27px,#2a923d 27px,#2a923d 28px,#4aad5c 28px,#4aad5c 33px,#39a04c 33px,#39a04c 34px,#2a923d 34px,#2a923d 36px,#39a04c 36px,#39a04c 37px,#2a923d 37px,#2a923d 39px,#39a04c 39px,#39a04c 40px,#4aad5c 40px,#4aad5c 42px,#39a04c 42px,#39a04c 45px,#2a923d 45px,#2a923d 47px,#39a04c 47px,#39a04c 48px,#2a923d 48px,#2a923d 49px,#39a04c 49px,#39a04c 50px,#4aad5c 50px,#4aad5c 52px,#2a923d 52px,#2a923d 53px,#4aad5c 53px,#4aad5c 58px,#39a04c 58px,#39a04c 59px,#2a923d 59px,#2a923d 60px,#39a04c 60px,#39a04c 62px,#4aad5c 62px,#4aad5c 63px,#2a923d 63px,#2a923d 66px,#39a04c 66px,#39a04c 67px,#4aad5c 67px,#4aad5c 68px,#39a04c 68px,#39a04c 71px,#2a923d 71px,#2a923d 72px,#4aad5c 72px,#4aad5c 73px,#39a04c 73px,#39a04c 75px,#2a923d 75px,#2a923d 77px,#39a04c 77px,#39a04c 78px,#2a923d 78px,#2a923d 79px,#39a04c 79px,#39a04c 82px,#2a923d 82px,#2a923d 83px,#4aad5c 83px,#4aad5c 84px,#39a04c 84px,#39a04c 86px,#4aad5c 86px,#4aad5c 88px,#2a923d 88px,#2a923d 89px,#39a04c 89px,#39a04c 91px,#4aad5c 91px,#4aad5c 95px,#2a923d 95px,#2a923d 96px,#39a04c 96px,#39a04c 97px,#4aad5c 97px,#4aad5c 99px,#39a04c 99px,#39a04c 100px,#4aad5c 100px,#4aad5c 102px,#2a923d 102px,#2a923d 104px,#39a04c 104px,#39a04c 105px,#2a923d 105px,#2a923d 106px,#39a04c 106px,#39a04c 113px,#2a923d 113px,#2a923d 114px,#39a04c 114px,#39a04c 115px,#4aad5c 115px,#4aad5c 117px,#2a923d 117px,#2a923d 118px,#4aad5c 118px,#4aad5c 119px,#39a04c 119px,#39a04c 121px,#2a923d 121px,#2a923d 124px,#4aad5c 124px,#4aad5c 125px,#39a04c 125px,#39a04c 126px,#4aad5c 126px,#4aad5c 127px,#39a04c 127px,#39a04c 128px,#4aad5c 128px,#4aad5c 130px,#2a923d 130px,#2a923d 131px,#4aad5c 131px,#4aad5c 132px,#2a923d 132px,#2a923d 139px,#39a04c 139px,#39a04c 140px,#4aad5c 140px,#4aad5c 141px,#39a04c 141px,#39a04c 142px,#4aad5c 142px,#4aad5c 143px,#39a04c 143px,#39a04c 145px,#2a923d 145px,#2a923d 147px,#39a04c 147px,#39a04c 148px,#2a923d 148px,#2a923d 151px,#39a04c 151px,#39a04c 152px,#4aad5c 152px,#4aad5c 153px,#39a04c 153px,#39a04c 154px)"></div>
<div class="b" style="left:766px;top:621px;width:21px;background:#2a923d"></div>
<div class="b" style="left:787px;top:621px;width:788px;background:repeating-linear-gradient(90deg,#4aad5c 0px,#4aad5c 3px,#2a923d 3px,#2a923d 6px,#39a04c 6px,#39a04c 7px,#4aad5c 7px,#4aad5c 8px,#39a04c 8px,#39a04c 9px,#4aad5c 9px,#4aad5c 10px,#39a04c 10px,#39a04c 11px,#2a923d 11px,#2a923d 12px,#39a04c 12px,#39a04c 13px,#4aad5c 13px,#4aad5c 14px,#39a04c 14px,#39a04c 16px,#2a923d 16px,#2a923d 17px,#4aad5c 17px,#4aad5c 18px,#39a04c 18px,#39a04c 20px,#2a923d 20px,#2a923d 21px,#39a04c 21px,#39a04c 26px,#4aad5c 26px,#4aad5c 31px,#39a04c 31px,#39a04c 33px,#4aad5c 33px,#4aad5c 34px,#39a04c 34px,#39a04c 36px,#2a923d 36px,#2a923d 38px,#4aad5c 38px,#4aad5c 39px,#39a04c 39px,#39a04c 41px,#2a923d 41px,#2a923d 44px,#4aad5c 44px,#4aad5c 46px,#2a923d 46px,#2a923d 47px,#39a04c 47px,#39a04c 49px,#4aad5c 49px,#4aad5c 52px,#39a04c 52px,#39a04c 53px,#4aad5c 53px,#4aad5c 55px,#39a04c 55px,#39a04c 57px,#4aad5c 57px,#4aad5c 58px,#39a04c 58px,#39a04c 60px,#4aad5c 60px,#4aad5c 62px,#39a04c 62px,#39a04c 63px,#4aad5c 63px,#4aad5c 64px,#39a04c 64px,#39a04c 65px,#2a923d 65px,#2a923d 66px,#39a04c 66px,#39a04c 67px,#2a923d 67px,#2a923d 68px,#4aad5c 68px,#4aad5c 71px,#2a923d 71px,#2a923d 78px,#39a04c 78px,#39a04c 80px,#4aad5c 80px,#4aad5c 82px,#39a04c 82px,#39a04c 83px,#2a923d 83px,#2a923d 84px,#39a04c 84px,#39a04c 85px,#2a923d 85px,#2a923d 86px,#39a04c 86px,#39a04c 88px,#2a923d 88px,#2a923d 92px,#4aad5c 92px,#4aad5c 93px,#39a04c 93px,#39a04c 95px,#4aad5c 95px,#4aad5c 98px,#2a923d 98px,#2a923d 99px,#39a04c 99px,#39a04c 102px,#4aad5c 102px,#4aad5c 104px,#39a04c 104px,#39a04c 107px,#4aad5c 107px,#4aad5c 109px,#39a04c 109px,#39a04c 110px,#2a923d 110px,#2a923d 113px,#39a04c 113px,#39a04c 115px,#4aad5c 115px,#4aad5c 116px,#2a923d 116px,#2a923d 118px,#4aad5c 118px,#4aad5c 121px,#2a923d 121px,#2a923d 122px,#39a04c 122px,#39a04c 123px,#2a923d 123px,#2a923d 124px,#4aad5c 124px,#4aad5c 125px,#39a04c 125px,#39a04c 126px,#4aad5c 126px,#4aad5c 131px,#39a04c 131px,#39a04c 132px,#2a923d 132px,#2a923d 133px,#39a04c 133px,#39a04c 135px,#2a923d 135px,#2a923d 136px,#39a04c 136px,#39a04c 137px,#2a923d 137px,#2a923d 139px,#39a04c 139px,#39a04c 140px,#4aad5c 140px,#4aad5c 141px,#2a923d 141px,#2a923d 143px,#39a04c 143px,#39a04c 145px,#2a923d 145px,#2a923d 146px,#4aad5c 146px,#4aad5c 147px,#39a04c 147px,#39a04c 150px,#2a923d 150px,#2a923d 151px,#39a04c 151px,#39a04c 153px,#4aad5c 153px,#4aad5c 154px,#39a04c 154px,#39a04c 155px,#4aad5c 155px,#4aad5c 156px,#2a923d 156px,#2a923d 157px,#39a04c 157px,#39a04c 158px,#4aad5c 158px,#4aad5c 160px,#39a04c 160px,#39a04c 162px,#2a923d 162px,#2a923d 163px,#4aad5c 163px,#4aad5c 166px,#2a923d 166px,#2a923d 168px,#4aad5c 168px,#4aad5c 170px,#39a04c 170px,#39a04c 171px,#2a923d 171px,#2a923d 172px,#4aad5c 172px,#4aad5c 173px,#39a04c 173px,#39a04c 174px,#2a923d 174px,#2a923d 176px,#4aad5c 176px,#4aad5c 177px,#39a04c 177px,#39a04c 178px,#4aad5c 178px,#4aad5c 180px,#2a923d 180px,#2a923d 183px,#39a04c 183px,#39a04c 184px,#4aad5c 184px,#4aad5c 186px,#2a923d 186px,#2a923d 187px,#4aad5c 187px,#4aad5c 189px,#2a923d 189px,#2a923d 190px,#4aad5c 190px,#4aad5c 191px)"></div>
<div class="b" style="left:766px;top:648px;width:19px;background:#2a923d"></div>
<div class="b" style="left:785px;top:648px;width:790px;background:repeating-linear-gradient(90deg,#39a04c 0px,#39a04c 2px,#2a923d 2px,#2a923d 3px,#4aad5c 3px,#4aad5c 4px,#2a923d 4px,#2a923d 6px,#39a04c 6px,#39a04c 9px,#2a923d 9px,#2a923d 11px,#4aad5c 11px,#4aad5c 12px,#2a923d 12px,#2a923d 13px,#39a04c 13px,#39a04c 20px,#4aad5c 20px,#4aad5c 22px,#39a04c 22px,#39a04c 26px,#4aad5c 26px,#4aad5c 28px,#39a04c 28px,#39a04c 29px,#4aad5c 29px,#4aad5c 33px,#39a04c 33px,#39a04c 35px,#2a923d 35px,#2a923d 38px,#4aad5c 38px,#4aad5c 39px,#2a923d 39px,#2a923d 40px,#4aad5c 40px,#4aad5c 42px,#39a04c 42px,#39a04c 45px,#4aad5c 45px,#4aad5c 48px,#39a04c 48px,#39a04c 50px,#2a923d 50px,#2a923d 53px,#4aad5c 53px,#4aad5c 55px,#39a04c 55px,#39a04c 57px,#4aad5c 57px,#4aad5c 58px,#39a04c 58px,#39a04c 62px,#4aad5c 62px,#4aad5c 64px,#39a04c 64px,#39a04c 66px,#2a923d 66px,#2a923d 68px,#39a04c 68px,#39a04c 70px,#4aad5c 70px,#4aad5c 71px,#39a04c 71px,#39a04c 73px,#4aad5c 73px,#4aad5c 74px,#39a04c 74px,#39a04c 75px,#4aad5c 75px,#4aad5c 76px,#2a923d 76px,#2a923d 77px,#39a04c 77px,#39a04c 79px,#2a923d 79px,#2a923d 80px,#4aad5c 80px,#4aad5c 83px,#39a04c 83px,#39a04c 84px,#4aad5c 84px,#4aad5c 86px,#39a04c 86px,#39a04c 87px,#2a923d 87px,#2a923d 88px,#39a04c 88px,#39a04c 95px,#4aad5c 95px,#4aad5c 98px,#39a04c 98px,#39a04c 99px,#4aad5c 99px,#4aad5c 100px,#39a04c 100px,#39a04c 103px,#4aad5c 103px,#4aad5c 104px,#39a04c 104px,#39a04c 105px,#4aad5c 105px,#4aad5c 108px,#2a923d 108px,#2a923d 110px,#4aad5c 110px,#4aad5c 113px,#39a04c 113px,#39a04c 115px,#4aad5c 115px,#4aad5c 116px,#39a04c 116px,#39a04c 119px,#4aad5c 119px,#4aad5c 120px,#39a04c 120px,#39a04c 121px,#2a923d 121px,#2a923d 122px,#4aad5c 122px,#4aad5c 123px,#2a923d 123px,#2a923d 124px,#39a04c 124px,#39a04c 127px,#2a923d 127px,#2a923d 131px,#4aad5c 131px,#4aad5c 134px,#2a923d 134px,#2a923d 137px,#4aad5c 137px,#4aad5c 138px,#39a04c 138px,#39a04c 140px,#2a923d 140px,#2a923d 141px,#39a04c 141px,#39a04c 144px,#2a923d 144px,#2a923d 145px,#4aad5c 145px,#4aad5c 146px,#39a04c 146px,#39a04c 148px,#4aad5c 148px,#4aad5c 149px,#39a04c 149px,#39a04c 150px,#4aad5c 150px,#4aad5c 153px,#39a04c 153px,#39a04c 155px,#2a923d 155px,#2a923d 158px,#39a04c 158px,#39a04c 159px,#2a923d 159px,#2a923d 161px,#39a04c 161px,#39a04c 162px,#2a923d 162px,#2a923d 163px,#4aad5c 163px,#4aad5c 165px,#39a04c 165px,#39a04c 166px,#4aad5c 166px,#4aad5c 173px,#2a923d 173px,#2a923d 175px,#39a04c 175px,#39a04c 178px,#2a923d 178px,#2a923d 179px,#39a04c 179px,#39a04c 180px,#4aad5c 180px,#4aad5c 182px,#2a923d 182px,#2a923d 184px,#4aad5c 184px,#4aad5c 187px,#2a923d 187px,#2a923d 188px,#39a04c 188px,#39a04c 190px,#4aad5c 190px,#4aad5c 191px,#39a04c 191px,#39a04c 192px,#4aad5c 192px,#4aad5c 194px,#39a04c 194px,#39a04c 195px,#4aad5c 195px,#4aad5c 196px,#39a04c 196px,#39a04c 203px,#4aad5c 203px,#4aad5c 207px,#39a04c 207px,#39a04c 209px,#2a923d 209px,#2a923d 210px,#39a04c 210px,#39a04c 211px,#4aad5c 211px,#4aad5c 213px,#2a923d 213px,#2a923d 214px,#39a04c 214px,#39a04c 215px,#4aad5c 215px,#4aad5c 218px,#39a04c 218px,#39a04c 219px,#4aad5c 219px,#4aad5c 220px,#2a923d 220px,#2a923d 221px,#4aad5c 221px,#4aad5c 222px,#39a04c 222px,#39a04c 227px,#2a923d 227px,#2a923d 228px)"></div>
<div class="b" style="left:299px;top:699px;width:1554px;background:#2a923d"><span class="l" style="left:5.6px">build_and_test (ubuntu-latest, Release, roslyn4.6)</span></div>
<div class="b" style="left:306px;top:726px;width:15px;background:#2a923d"></div>
<div class="b" style="left:321px;top:726px;width:12px;background:#4aad5c"></div>
<div class="b" style="left:333px;top:726px;width:92px;background:#2a923d"><span class="l" style="left:6.6px">Setup .NET<s>...</s></span></div>
<div class="b" style="left:425px;top:726px;width:1390px;background:#4aad5c"><span class="l" style="left:5.4px">Run tests</span></div>
<div class="b" style="left:1815px;top:726px;width:15px;background:#2a923d"></div>
<div class="b" style="left:1830px;top:726px;width:4px;background:#4aad5c"></div>
<div class="b" style="left:308px;top:753px;width:4px;background:#b8962a"></div>
<div class="b" style="left:325px;top:753px;width:8px;background:#b8962a"></div>
<div class="b" style="left:333px;top:753px;width:4px;background:#a27d00"></div>
<div class="b" style="left:428px;top:753px;width:3px;background:#b8962a"></div>
<div class="b" style="left:878px;top:753px;width:19px;background:#2a923d"></div>
<div class="b" style="left:897px;top:753px;width:898px;background:repeating-linear-gradient(90deg,#2a923d 0px,#2a923d 1px,#4aad5c 1px,#4aad5c 3px,#2a923d 3px,#2a923d 5px,#39a04c 5px,#39a04c 12px,#2a923d 12px,#2a923d 14px,#4aad5c 14px,#4aad5c 15px,#2a923d 15px,#2a923d 17px,#39a04c 17px,#39a04c 18px,#2a923d 18px,#2a923d 20px,#4aad5c 20px,#4aad5c 24px,#39a04c 24px,#39a04c 25px,#2a923d 25px,#2a923d 26px,#39a04c 26px,#39a04c 27px,#2a923d 27px,#2a923d 29px,#39a04c 29px,#39a04c 30px,#4aad5c 30px,#4aad5c 31px,#2a923d 31px,#2a923d 32px,#39a04c 32px,#39a04c 35px,#2a923d 35px,#2a923d 36px,#39a04c 36px,#39a04c 39px,#4aad5c 39px,#4aad5c 40px,#39a04c 40px,#39a04c 43px,#2a923d 43px,#2a923d 46px,#39a04c 46px,#39a04c 48px,#2a923d 48px,#2a923d 49px,#39a04c 49px,#39a04c 50px,#4aad5c 50px,#4aad5c 51px,#39a04c 51px,#39a04c 53px,#4aad5c 53px,#4aad5c 55px,#2a923d 55px,#2a923d 62px,#39a04c 62px,#39a04c 64px,#4aad5c 64px,#4aad5c 67px,#39a04c 67px,#39a04c 69px,#4aad5c 69px,#4aad5c 72px,#2a923d 72px,#2a923d 73px,#39a04c 73px,#39a04c 74px,#2a923d 74px,#2a923d 76px,#39a04c 76px,#39a04c 78px,#2a923d 78px,#2a923d 81px,#39a04c 81px,#39a04c 82px,#4aad5c 82px,#4aad5c 85px,#2a923d 85px,#2a923d 86px,#4aad5c 86px,#4aad5c 88px,#39a04c 88px,#39a04c 89px,#2a923d 89px,#2a923d 93px,#4aad5c 93px,#4aad5c 94px,#39a04c 94px,#39a04c 96px,#2a923d 96px,#2a923d 97px,#39a04c 97px,#39a04c 98px,#4aad5c 98px,#4aad5c 101px,#39a04c 101px,#39a04c 102px,#2a923d 102px,#2a923d 103px,#39a04c 103px,#39a04c 104px,#4aad5c 104px,#4aad5c 108px,#39a04c 108px,#39a04c 109px,#2a923d 109px,#2a923d 114px,#39a04c 114px,#39a04c 115px,#4aad5c 115px,#4aad5c 117px,#2a923d 117px,#2a923d 118px,#4aad5c 118px,#4aad5c 119px,#2a923d 119px,#2a923d 122px,#39a04c 122px,#39a04c 124px,#4aad5c 124px,#4aad5c 126px,#39a04c 126px,#39a04c 127px,#4aad5c 127px,#4aad5c 129px,#39a04c 129px,#39a04c 130px,#4aad5c 130px,#4aad5c 131px,#39a04c 131px,#39a04c 132px,#4aad5c 132px,#4aad5c 135px,#2a923d 135px,#2a923d 136px,#39a04c 136px,#39a04c 138px,#4aad5c 138px,#4aad5c 140px,#39a04c 140px,#39a04c 142px,#2a923d 142px,#2a923d 144px,#4aad5c 144px,#4aad5c 147px,#2a923d 147px,#2a923d 149px,#39a04c 149px,#39a04c 150px,#2a923d 150px,#2a923d 153px,#39a04c 153px,#39a04c 154px,#2a923d 154px,#2a923d 156px,#39a04c 156px,#39a04c 159px,#2a923d 159px,#2a923d 161px,#39a04c 161px,#39a04c 162px,#2a923d 162px,#2a923d 163px,#39a04c 163px,#39a04c 164px,#2a923d 164px,#2a923d 165px,#39a04c 165px,#39a04c 168px,#2a923d 168px,#2a923d 170px,#39a04c 170px,#39a04c 171px,#4aad5c 171px,#4aad5c 172px,#2a923d 172px,#2a923d 173px,#39a04c 173px,#39a04c 174px,#4aad5c 174px,#4aad5c 177px,#39a04c 177px,#39a04c 180px,#2a923d 180px,#2a923d 185px,#4aad5c 185px,#4aad5c 186px,#39a04c 186px,#39a04c 187px,#2a923d 187px,#2a923d 190px,#39a04c 190px,#39a04c 195px,#4aad5c 195px,#4aad5c 196px,#2a923d 196px,#2a923d 197px,#39a04c 197px,#39a04c 199px,#2a923d 199px,#2a923d 202px,#4aad5c 202px,#4aad5c 203px,#39a04c 203px,#39a04c 206px,#2a923d 206px,#2a923d 208px,#39a04c 208px,#39a04c 210px,#4aad5c 210px,#4aad5c 211px,#39a04c 211px,#39a04c 212px,#4aad5c 212px,#4aad5c 214px,#39a04c 214px,#39a04c 217px)"></div>
<div class="b" style="left:1354px;top:753px;width:17px;background:#4aad5c"></div>
<div class="b" style="left:1821px;top:753px;width:3px;background:#a27d00"></div>
<div class="b" style="left:878px;top:780px;width:17px;background:#2a923d"></div>
<div class="b" style="left:895px;top:780px;width:889px;background:repeating-linear-gradient(90deg,#4aad5c 0px,#4aad5c 1px,#39a04c 1px,#39a04c 2px,#4aad5c 2px,#4aad5c 5px,#2a923d 5px,#2a923d 6px,#39a04c 6px,#39a04c 7px,#4aad5c 7px,#4aad5c 10px,#39a04c 10px,#39a04c 12px,#2a923d 12px,#2a923d 13px,#4aad5c 13px,#4aad5c 15px,#39a04c 15px,#39a04c 17px,#2a923d 17px,#2a923d 19px,#39a04c 19px,#39a04c 22px,#4aad5c 22px,#4aad5c 23px,#39a04c 23px,#39a04c 24px,#2a923d 24px,#2a923d 25px,#39a04c 25px,#39a04c 26px,#2a923d 26px,#2a923d 27px,#39a04c 27px,#39a04c 29px,#4aad5c 29px,#4aad5c 30px,#39a04c 30px,#39a04c 32px,#4aad5c 32px,#4aad5c 33px,#39a04c 33px,#39a04c 35px,#2a923d 35px,#2a923d 36px,#39a04c 36px,#39a04c 38px,#2a923d 38px,#2a923d 39px,#39a04c 39px,#39a04c 40px,#4aad5c 40px,#4aad5c 43px,#2a923d 43px,#2a923d 44px,#4aad5c 44px,#4aad5c 46px,#39a04c 46px,#39a04c 49px,#2a923d 49px,#2a923d 50px,#4aad5c 50px,#4aad5c 53px,#2a923d 53px,#2a923d 55px,#4aad5c 55px,#4aad5c 57px,#2a923d 57px,#2a923d 58px,#39a04c 58px,#39a04c 60px,#4aad5c 60px,#4aad5c 61px,#39a04c 61px,#39a04c 63px,#2a923d 63px,#2a923d 64px,#39a04c 64px,#39a04c 66px,#4aad5c 66px,#4aad5c 67px,#39a04c 67px,#39a04c 69px,#4aad5c 69px,#4aad5c 70px,#39a04c 70px,#39a04c 71px,#4aad5c 71px,#4aad5c 74px,#2a923d 74px,#2a923d 75px,#4aad5c 75px,#4aad5c 80px,#2a923d 80px,#2a923d 81px,#4aad5c 81px,#4aad5c 83px,#39a04c 83px,#39a04c 85px,#4aad5c 85px,#4aad5c 87px,#39a04c 87px,#39a04c 90px,#4aad5c 90px,#4aad5c 91px,#39a04c 91px,#39a04c 92px,#4aad5c 92px,#4aad5c 93px,#2a923d 93px,#2a923d 97px,#39a04c 97px,#39a04c 99px,#4aad5c 99px,#4aad5c 100px,#39a04c 100px,#39a04c 101px,#4aad5c 101px,#4aad5c 103px,#2a923d 103px,#2a923d 107px,#39a04c 107px,#39a04c 108px,#4aad5c 108px,#4aad5c 110px,#2a923d 110px,#2a923d 111px,#39a04c 111px,#39a04c 112px,#2a923d 112px,#2a923d 116px,#4aad5c 116px,#4aad5c 118px,#2a923d 118px,#2a923d 119px,#39a04c 119px,#39a04c 120px,#2a923d 120px,#2a923d 121px,#4aad5c 121px,#4aad5c 122px,#2a923d 122px,#2a923d 124px,#39a04c 124px,#39a04c 126px,#2a923d 126px,#2a923d 128px,#4aad5c 128px,#4aad5c 129px,#39a04c 129px,#39a04c 136px,#2a923d 136px,#2a923d 137px,#4aad5c 137px,#4aad5c 141px,#39a04c 141px,#39a04c 142px,#4aad5c 142px,#4aad5c 143px,#39a04c 143px,#39a04c 144px,#4aad5c 144px,#4aad5c 151px,#39a04c 151px,#39a04c 152px,#2a923d 152px,#2a923d 154px,#39a04c 154px,#39a04c 155px,#4aad5c 155px,#4aad5c 156px,#39a04c 156px,#39a04c 157px,#2a923d 157px,#2a923d 159px,#39a04c 159px,#39a04c 160px,#4aad5c 160px,#4aad5c 163px,#39a04c 163px,#39a04c 164px)"></div>
<div class="b" style="left:878px;top:807px;width:27px;background:#2a923d"></div>
<div class="b" style="left:905px;top:807px;width:873px;background:repeating-linear-gradient(90deg,#4aad5c 0px,#4aad5c 2px,#39a04c 2px,#39a04c 5px,#4aad5c 5px,#4aad5c 6px,#2a923d 6px,#2a923d 9px,#39a04c 9px,#39a04c 16px,#4aad5c 16px,#4aad5c 23px,#39a04c 23px,#39a04c 24px,#4aad5c 24px,#4aad5c 26px,#39a04c 26px,#39a04c 27px,#2a923d 27px,#2a923d 28px,#39a04c 28px,#39a04c 30px,#4aad5c 30px,#4aad5c 33px,#39a04c 33px,#39a04c 36px,#2a923d 36px,#2a923d 38px,#4aad5c 38px,#4aad5c 39px,#39a04c 39px,#39a04c 40px,#4aad5c 40px,#4aad5c 44px,#39a04c 44px,#39a04c 45px,#4aad5c 45px,#4aad5c 47px,#2a923d 47px,#2a923d 48px,#39a04c 48px,#39a04c 49px,#4aad5c 49px,#4aad5c 51px,#2a923d 51px,#2a923d 52px,#39a04c 52px,#39a04c 55px,#4aad5c 55px,#4aad5c 58px,#2a923d 58px,#2a923d 61px,#4aad5c 61px,#4aad5c 62px,#2a923d 62px,#2a923d 65px,#39a04c 65px,#39a04c 66px,#2a923d 66px,#2a923d 67px,#39a04c 67px,#39a04c 69px,#4aad5c 69px,#4aad5c 70px,#39a04c 70px,#39a04c 72px,#4aad5c 72px,#4aad5c 74px,#2a923d 74px,#2a923d 75px,#39a04c 75px,#39a04c 76px,#4aad5c 76px,#4aad5c 78px,#39a04c 78px,#39a04c 79px,#4aad5c 79px,#4aad5c 80px,#39a04c 80px,#39a04c 82px,#2a923d 82px,#2a923d 83px,#39a04c 83px,#39a04c 86px,#2a923d 86px,#2a923d 87px,#39a04c 87px,#39a04c 90px,#4aad5c 90px,#4aad5c 91px,#39a04c 91px,#39a04c 96px,#4aad5c 96px,#4aad5c 97px,#39a04c 97px,#39a04c 102px,#4aad5c 102px,#4aad5c 103px,#39a04c 103px,#39a04c 104px,#2a923d 104px,#2a923d 105px,#39a04c 105px,#39a04c 108px,#4aad5c 108px,#4aad5c 110px,#2a923d 110px,#2a923d 113px,#39a04c 113px,#39a04c 115px,#4aad5c 115px,#4aad5c 118px,#39a04c 118px,#39a04c 123px,#4aad5c 123px,#4aad5c 126px,#2a923d 126px,#2a923d 128px,#4aad5c 128px,#4aad5c 131px,#2a923d 131px,#2a923d 132px,#4aad5c 132px,#4aad5c 134px,#2a923d 134px,#2a923d 136px,#39a04c 136px,#39a04c 139px,#2a923d 139px,#2a923d 143px,#4aad5c 143px,#4aad5c 146px,#39a04c 146px,#39a04c 148px,#2a923d 148px,#2a923d 150px,#4aad5c 150px,#4aad5c 153px,#2a923d 153px,#2a923d 154px,#4aad5c 154px,#4aad5c 157px,#39a04c 157px,#39a04c 158px,#2a923d 158px,#2a923d 159px,#39a04c 159px,#39a04c 161px,#4aad5c 161px,#4aad5c 163px,#39a04c 163px,#39a04c 164px,#4aad5c 164px,#4aad5c 167px,#2a923d 167px,#2a923d 170px,#4aad5c 170px,#4aad5c 172px,#39a04c 172px,#39a04c 175px,#4aad5c 175px,#4aad5c 178px,#39a04c 178px,#39a04c 179px,#4aad5c 179px,#4aad5c 180px,#39a04c 180px,#39a04c 181px,#4aad5c 181px,#4aad5c 182px,#39a04c 182px,#39a04c 183px,#2a923d 183px,#2a923d 184px,#39a04c 184px,#39a04c 187px,#4aad5c 187px,#4aad5c 188px,#2a923d 188px,#2a923d 190px,#39a04c 190px,#39a04c 193px,#2a923d 193px,#2a923d 194px,#4aad5c 194px,#4aad5c 195px,#39a04c 195px,#39a04c 196px,#4aad5c 196px,#4aad5c 197px,#39a04c 197px,#39a04c 198px,#2a923d 198px,#2a923d 201px)"></div>
<div class="b" style="left:878px;top:834px;width:27px;background:#2a923d"></div>
<div class="b" style="left:905px;top:834px;width:871px;background:repeating-linear-gradient(90deg,#39a04c 0px,#39a04c 2px,#2a923d 2px,#2a923d 3px,#39a04c 3px,#39a04c 6px,#2a923d 6px,#2a923d 7px,#39a04c 7px,#39a04c 8px,#4aad5c 8px,#4aad5c 9px,#2a923d 9px,#2a923d 11px,#39a04c 11px,#39a04c 12px,#2a923d 12px,#2a923d 14px,#4aad5c 14px,#4aad5c 16px,#39a04c 16px,#39a04c 19px,#4aad5c 19px,#4aad5c 20px,#2a923d 20px,#2a923d 22px,#4aad5c 22px,#4aad5c 25px,#39a04c 25px,#39a04c 27px,#4aad5c 27px,#4aad5c 28px,#2a923d 28px,#2a923d 29px,#4aad5c 29px,#4aad5c 30px,#39a04c 30px,#39a04c 32px,#4aad5c 32px,#4aad5c 34px,#2a923d 34px,#2a923d 35px,#4aad5c 35px,#4aad5c 37px,#39a04c 37px,#39a04c 39px,#4aad5c 39px,#4aad5c 40px,#2a923d 40px,#2a923d 41px,#39a04c 41px,#39a04c 43px,#4aad5c 43px,#4aad5c 45px,#39a04c 45px,#39a04c 47px,#2a923d 47px,#2a923d 48px,#39a04c 48px,#39a04c 50px,#4aad5c 50px,#4aad5c 51px,#39a04c 51px,#39a04c 52px,#2a923d 52px,#2a923d 53px,#39a04c 53px,#39a04c 54px,#4aad5c 54px,#4aad5c 55px,#39a04c 55px,#39a04c 57px,#4aad5c 57px,#4aad5c 59px,#39a04c 59px,#39a04c 64px,#4aad5c 64px,#4aad5c 65px,#39a04c 65px,#39a04c 68px,#4aad5c 68px,#4aad5c 70px,#39a04c 70px,#39a04c 73px,#2a923d 73px,#2a923d 74px,#39a04c 74px,#39a04c 75px,#2a923d 75px,#2a923d 76px,#39a04c 76px,#39a04c 78px,#4aad5c 78px,#4aad5c 79px,#39a04c 79px,#39a04c 80px,#4aad5c 80px,#4aad5c 82px,#39a04c 82px,#39a04c 84px,#4aad5c 84px,#4aad5c 85px,#39a04c 85px,#39a04c 86px,#4aad5c 86px,#4aad5c 93px,#2a923d 93px,#2a923d 94px,#4aad5c 94px,#4aad5c 95px,#2a923d 95px,#2a923d 96px,#39a04c 96px,#39a04c 101px,#2a923d 101px,#2a923d 105px,#4aad5c 105px,#4aad5c 106px,#39a04c 106px,#39a04c 108px,#4aad5c 108px,#4aad5c 110px,#39a04c 110px,#39a04c 112px,#4aad5c 112px,#4aad5c 114px,#39a04c 114px,#39a04c 116px,#4aad5c 116px,#4aad5c 117px,#39a04c 117px,#39a04c 119px,#2a923d 119px,#2a923d 120px,#39a04c 120px,#39a04c 121px,#2a923d 121px,#2a923d 126px,#39a04c 126px,#39a04c 129px,#4aad5c 129px,#4aad5c 130px,#39a04c 130px,#39a04c 133px,#4aad5c 133px,#4aad5c 134px,#39a04c 134px,#39a04c 136px,#2a923d 136px,#2a923d 138px,#39a04c 138px,#39a04c 139px,#4aad5c 139px,#4aad5c 141px,#2a923d 141px,#2a923d 142px,#39a04c 142px,#39a04c 144px,#4aad5c 144px,#4aad5c 145px,#39a04c 145px,#39a04c 146px,#4aad5c 146px,#4aad5c 149px,#39a04c 149px,#39a04c 154px,#4aad5c 154px,#4aad5c 157px,#39a04c 157px,#39a04c 159px,#2a923d 159px,#2a923d 161px,#4aad5c 161px,#4aad5c 162px,#39a04c 162px,#39a04c 163px,#2a923d 163px,#2a923d 164px,#39a04c 164px,#39a04c 166px,#4aad5c 166px,#4aad5c 169px,#39a04c 169px,#39a04c 170px,#2a923d 170px,#2a923d 173px,#39a04c 173px,#39a04c 174px,#4aad5c 174px,#4aad5c 175px,#39a04c 175px,#39a04c 177px,#2a923d 177px,#2a923d 184px,#39a04c 184px,#39a04c 185px,#2a923d 185px,#2a923d 186px,#4aad5c 186px,#4aad5c 187px,#39a04c 187px,#39a04c 189px,#2a923d 189px,#2a923d 190px,#4aad5c 190px,#4aad5c 192px,#39a04c 192px,#39a04c 194px,#2a923d 194px,#2a923d 196px,#4aad5c 196px,#4aad5c 198px,#39a04c 198px,#39a04c 199px,#4aad5c 199px,#4aad5c 200px,#39a04c 200px,#39a04c 201px,#2a923d 201px,#2a923d 204px,#39a04c 204px,#39a04c 206px,#4aad5c 206px,#4aad5c 208px,#39a04c 208px,#39a04c 210px,#4aad5c 210px,#4aad5c 212px,#2a923d 212px,#2a923d 213px,#4aad5c 213px,#4aad5c 214px,#39a04c 214px,#39a04c 215px,#4aad5c 215px,#4aad5c 216px,#2a923d 216px,#2a923d 217px,#4aad5c 217px,#4aad5c 219px,#39a04c 219px,#39a04c 222px,#2a923d 222px,#2a923d 224px,#4aad5c 224px,#4aad5c 227px,#39a04c 227px,#39a04c 229px,#4aad5c 229px,#4aad5c 231px,#2a923d 231px,#2a923d 234px,#39a04c 234px,#39a04c 237px,#4aad5c 237px,#4aad5c 238px)"></div>
<div class="b" style="left:1144px;top:834px;width:11px;background:#2a923d"></div>
<div class="b" style="left:380px;top:885px;width:1406px;background:#2a923d"><span class="l" style="left:6.3px">create_nuget</span></div>
<div class="b" style="left:388px;top:912px;width:22px;background:#2a923d"></div>
<div class="b" style="left:410px;top:912px;width:8px;background:#4aad5c"></div>
<div class="b" style="left:418px;top:912px;width:66px;background:#2a923d"></div>
<div class="b" style="left:484px;top:912px;width:221px;background:#4aad5c"><span class="l" style="left:6px">Run dotnet run --project sr<s>...</s></span></div>
<div class="b" style="left:705px;top:912px;width:127px;background:#2a923d"><span class="l" style="left:6px">Run dotnet buil<s>...</s></span></div>
<div class="b" style="left:832px;top:912px;width:81px;background:#4aad5c"><span class="l" style="left:5.6px">Run dotne<s>...</s></span></div>
<div class="b" style="left:913px;top:912px;width:118px;background:#2a923d"><span class="l" style="left:6px">Run dotnet bui<s>...</s></span></div>
<div class="b" style="left:1031px;top:912px;width:74px;background:#4aad5c"></div>
<div class="b" style="left:1105px;top:912px;width:111px;background:#2a923d"><span class="l" style="left:6px">Run dotnet bu<s>...</s></span></div>
<div class="b" style="left:1216px;top:912px;width:74px;background:#4aad5c"></div>
<div class="b" style="left:1290px;top:912px;width:112px;background:#2a923d"><span class="l" style="left:6.4px">Run dotnet bu<s>...</s></span></div>
<div class="b" style="left:1402px;top:912px;width:73px;background:#4aad5c"></div>
<div class="b" style="left:1475px;top:912px;width:119px;background:#2a923d"><span class="l" style="left:6.4px">Run dotnet bui<s>...</s></span></div>
<div class="b" style="left:1594px;top:912px;width:81px;background:#4aad5c"><span class="l" style="left:5.7px">Run dotne<s>...</s></span></div>
<div class="b" style="left:1675px;top:912px;width:15px;background:#2a923d"></div>
<div class="b" style="left:1690px;top:912px;width:14px;background:#4aad5c"></div>
<div class="b" style="left:1704px;top:912px;width:23px;background:#2a923d"></div>
<div class="b" style="left:1727px;top:912px;width:14px;background:#4aad5c"></div>
<div class="b" style="left:1741px;top:912px;width:23px;background:#2a923d"></div>
<div class="b" style="left:1764px;top:912px;width:3px;background:#4aad5c"></div>
<div class="b" style="left:394px;top:939px;width:4px;background:#b8962a"></div>
<div class="b" style="left:411px;top:939px;width:7px;background:#b8962a"></div>
<div class="b" style="left:418px;top:939px;width:4px;background:#a27d00"></div>
<div class="b" style="left:491px;top:939px;width:3px;background:#b8962a"></div>
<div class="b" style="left:710px;top:939px;width:3px;background:#a27d00"></div>
<div class="b" style="left:716px;top:939px;width:17px;background:#969696"></div>
<div class="b" style="left:733px;top:939px;width:99px;background:#7a7a7a"><span class="l" style="left:7px">Meziantou.A<s>...</s></span></div>
<div class="b" style="left:836px;top:939px;width:3px;background:#b8962a"></div>
<div class="b" style="left:841px;top:939px;width:14px;background:#7a7a7a"></div>
<div class="b" style="left:855px;top:939px;width:59px;background:#969696"></div>
<div class="b" style="left:919px;top:939px;width:3px;background:#a27d00"></div>
<div class="b" style="left:924px;top:939px;width:12px;background:#969696"></div>
<div class="b" style="left:936px;top:939px;width:93px;background:#7a7a7a"><span class="l" style="left:6.6px">Meziantou<s>...</s></span></div>
<div class="b" style="left:1033px;top:939px;width:4px;background:#b8962a"></div>
<div class="b" style="left:1038px;top:939px;width:12px;background:#7a7a7a"></div>
<div class="b" style="left:1050px;top:939px;width:52px;background:#969696"></div>
<div class="b" style="left:1106px;top:939px;width:4px;background:#a27d00"></div>
<div class="b" style="left:1112px;top:939px;width:13px;background:#969696"></div>
<div class="b" style="left:1125px;top:939px;width:88px;background:#7a7a7a"><span class="l" style="left:6.6px">Meziantou<s>...</s></span></div>
<div class="b" style="left:1217px;top:939px;width:3px;background:#b8962a"></div>
<div class="b" style="left:1222px;top:939px;width:13px;background:#7a7a7a"></div>
<div class="b" style="left:1235px;top:939px;width:53px;background:#969696"></div>
<div class="b" style="left:1292px;top:939px;width:4px;background:#a27d00"></div>
<div class="b" style="left:1298px;top:939px;width:13px;background:#969696"></div>
<div class="b" style="left:1311px;top:939px;width:88px;background:#7a7a7a"><span class="l" style="left:6.2px">Meziantou<s>...</s></span></div>
<div class="b" style="left:1403px;top:939px;width:3px;background:#b8962a"></div>
<div class="b" style="left:1408px;top:939px;width:13px;background:#7a7a7a"></div>
<div class="b" style="left:1421px;top:939px;width:52px;background:#969696"></div>
<div class="b" style="left:1477px;top:939px;width:4px;background:#a27d00"></div>
<div class="b" style="left:1483px;top:939px;width:14px;background:#969696"></div>
<div class="b" style="left:1497px;top:939px;width:96px;background:#7a7a7a"><span class="l" style="left:6.7px">Meziantou.A<s>...</s></span></div>
<div class="b" style="left:1598px;top:939px;width:3px;background:#b8962a"></div>
<div class="b" style="left:1603px;top:939px;width:13px;background:#7a7a7a"></div>
<div class="b" style="left:1616px;top:939px;width:56px;background:#969696"></div>
<div class="b" style="left:1676px;top:939px;width:3px;background:#a27d00"></div>
<div class="b" style="left:1682px;top:939px;width:5px;background:#969696"></div>
<div class="b" style="left:1692px;top:939px;width:3px;background:#a27d00"></div>
<div class="b" style="left:1698px;top:939px;width:7px;background:#969696"></div>
<div class="b" style="left:1709px;top:939px;width:4px;background:#a27d00"></div>
<div class="b" style="left:1714px;top:939px;width:7px;background:#969696"></div>
<div class="b" style="left:1721px;top:939px;width:7px;background:#7a7a7a"></div>
<div class="b" style="left:1732px;top:939px;width:3px;background:#b8962a"></div>
<div class="b" style="left:1748px;top:939px;width:3px;background:#a27d00"></div>
<div class="b" style="left:716px;top:966px;width:2px;background:#969696"></div>
<div class="b" style="left:718px;top:966px;width:16px;background:#216eac"></div>
<div class="b" style="left:734px;top:966px;width:98px;background:#01528f"><span class="l" style="left:6px">DispatchTo<s>...</s></span></div>
<div class="b" style="left:832px;top:966px;width:3px;background:#216eac"></div>
<div class="b" style="left:842px;top:966px;width:2px;background:#969696"></div>
<div class="b" style="left:844px;top:966px;width:11px;background:#216eac"></div>
<div class="b" style="left:855px;top:966px;width:59px;background:#01528f"></div>
<div class="b" style="left:914px;top:966px;width:3px;background:#216eac"></div>
<div class="b" style="left:924px;top:966px;width:3px;background:#969696"></div>
<div class="b" style="left:927px;top:966px;width:9px;background:#216eac"></div>
<div class="b" style="left:936px;top:966px;width:93px;background:#01528f"><span class="l" style="left:6.6px">DispatchTo<s>...</s></span></div>
<div class="b" style="left:1029px;top:966px;width:3px;background:#216eac"></div>
<div class="b" style="left:1039px;top:966px;width:2px;background:#969696"></div>
<div class="b" style="left:1041px;top:966px;width:9px;background:#216eac"></div>
<div class="b" style="left:1050px;top:966px;width:52px;background:#01528f"></div>
<div class="b" style="left:1102px;top:966px;width:3px;background:#216eac"></div>
<div class="b" style="left:1112px;top:966px;width:2px;background:#969696"></div>
<div class="b" style="left:1114px;top:966px;width:11px;background:#216eac"></div>
<div class="b" style="left:1125px;top:966px;width:88px;background:#01528f"><span class="l" style="left:6.6px">DispatchT<s>...</s></span></div>
<div class="b" style="left:1213px;top:966px;width:3px;background:#216eac"></div>
<div class="b" style="left:1223px;top:966px;width:2px;background:#969696"></div>
<div class="b" style="left:1225px;top:966px;width:10px;background:#216eac"></div>
<div class="b" style="left:1235px;top:966px;width:53px;background:#01528f"></div>
<div class="b" style="left:1288px;top:966px;width:3px;background:#216eac"></div>
<div class="b" style="left:1298px;top:966px;width:3px;background:#969696"></div>
<div class="b" style="left:1301px;top:966px;width:10px;background:#216eac"></div>
<div class="b" style="left:1311px;top:966px;width:88px;background:#01528f"><span class="l" style="left:6.2px">DispatchT<s>...</s></span></div>
<div class="b" style="left:1399px;top:966px;width:3px;background:#216eac"></div>
<div class="b" style="left:1409px;top:966px;width:2px;background:#969696"></div>
<div class="b" style="left:1411px;top:966px;width:9px;background:#216eac"></div>
<div class="b" style="left:1420px;top:966px;width:53px;background:#01528f"></div>
<div class="b" style="left:1473px;top:966px;width:3px;background:#216eac"></div>
<div class="b" style="left:1483px;top:966px;width:2px;background:#969696"></div>
<div class="b" style="left:1485px;top:966px;width:12px;background:#216eac"></div>
<div class="b" style="left:1497px;top:966px;width:96px;background:#01528f"><span class="l" style="left:6.7px">DispatchTo<s>...</s></span></div>
<div class="b" style="left:1593px;top:966px;width:3px;background:#216eac"></div>
<div class="b" style="left:1603px;top:966px;width:2px;background:#969696"></div>
<div class="b" style="left:1605px;top:966px;width:11px;background:#216eac"></div>
<div class="b" style="left:1616px;top:966px;width:55px;background:#01528f"></div>
<div class="b" style="left:1671px;top:966px;width:4px;background:#216eac"></div>
<div class="b" style="left:1682px;top:966px;width:5px;background:#216eac"></div>
<div class="b" style="left:1698px;top:966px;width:2px;background:#969696"></div>
<div class="b" style="left:1700px;top:966px;width:2px;background:#216eac"></div>
<div class="b" style="left:1702px;top:966px;width:3px;background:#01528f"></div>
<div class="b" style="left:1705px;top:966px;width:2px;background:#216eac"></div>
<div class="b" style="left:1715px;top:966px;width:1px;background:#969696"></div>
<div class="b" style="left:1716px;top:966px;width:9px;background:#01528f"></div>
<div class="b" style="left:1725px;top:966px;width:1px;background:#969696"></div>
<div class="b" style="left:1726px;top:966px;width:5px;background:#216eac"></div>
<div class="b" style="left:717px;top:993px;width:1px;background:#969696"></div>
<div class="b" style="left:718px;top:993px;width:16px;background:#2389dd"></div>
<div class="b" style="left:734px;top:993px;width:98px;background:#026fc5"><span class="l" style="left:6px">MSBuild</span></div>
<div class="b" style="left:843px;top:993px;width:1px;background:#969696"></div>
<div class="b" style="left:844px;top:993px;width:12px;background:#026fc5"></div>
<div class="b" style="left:856px;top:993px;width:58px;background:#2389dd"></div>
<div class="b" style="left:925px;top:993px;width:2px;background:#969696"></div>
<div class="b" style="left:927px;top:993px;width:9px;background:#2389dd"></div>
<div class="b" style="left:936px;top:993px;width:93px;background:#026fc5"><span class="l" style="left:6.6px">MSBuild</span></div>
<div class="b" style="left:1040px;top:993px;width:1px;background:#969696"></div>
<div class="b" style="left:1041px;top:993px;width:9px;background:#026fc5"></div>
<div class="b" style="left:1050px;top:993px;width:52px;background:#2389dd"></div>
<div class="b" style="left:1113px;top:993px;width:2px;background:#969696"></div>
<div class="b" style="left:1115px;top:993px;width:10px;background:#2389dd"></div>
<div class="b" style="left:1125px;top:993px;width:88px;background:#026fc5"><span class="l" style="left:6.6px">MSBuild</span></div>
<div class="b" style="left:1224px;top:993px;width:1px;background:#969696"></div>
<div class="b" style="left:1225px;top:993px;width:10px;background:#026fc5"></div>
<div class="b" style="left:1235px;top:993px;width:53px;background:#2389dd"></div>
<div class="b" style="left:1299px;top:993px;width:2px;background:#969696"></div>
<div class="b" style="left:1301px;top:993px;width:10px;background:#2389dd"></div>
<div class="b" style="left:1311px;top:993px;width:88px;background:#026fc5"><span class="l" style="left:6.2px">MSBuild</span></div>
<div class="b" style="left:1410px;top:993px;width:1px;background:#969696"></div>
<div class="b" style="left:1411px;top:993px;width:10px;background:#026fc5"></div>
<div class="b" style="left:1421px;top:993px;width:52px;background:#2389dd"></div>
<div class="b" style="left:1484px;top:993px;width:2px;background:#969696"></div>
<div class="b" style="left:1486px;top:993px;width:11px;background:#2389dd"></div>
<div class="b" style="left:1497px;top:993px;width:96px;background:#026fc5"><span class="l" style="left:6.7px">MSBuild</span></div>
<div class="b" style="left:1604px;top:993px;width:2px;background:#969696"></div>
<div class="b" style="left:1606px;top:993px;width:10px;background:#026fc5"></div>
<div class="b" style="left:1616px;top:993px;width:56px;background:#2389dd"></div>
<div class="b" style="left:1682px;top:993px;width:5px;background:#2389dd"></div>
<div class="b" style="left:1698px;top:993px;width:10px;background:#026fc5"></div>
<div class="b" style="left:1716px;top:993px;width:5px;background:#2389dd"></div>
<div class="b" style="left:1721px;top:993px;width:5px;background:#026fc5"></div>
<div class="b" style="left:1726px;top:993px;width:5px;background:#2389dd"></div>
<div class="b" style="left:716px;top:1020px;width:6px;background:#01528f"></div>
<div class="b" style="left:735px;top:1020px;width:93px;background:#026fc5"><span class="l" style="left:8.7px">Csc (Mezia<s>...</s></span></div>
<div class="b" style="left:828px;top:1020px;width:4px;background:#2389dd"></div>
<div class="b" style="left:832px;top:1020px;width:3px;background:#216eac"></div>
<div class="b" style="left:842px;top:1020px;width:6px;background:#216eac"></div>
<div class="b" style="left:856px;top:1020px;width:55px;background:#026fc5"></div>
<div class="b" style="left:911px;top:1020px;width:7px;background:#216eac"></div>
<div class="b" style="left:924px;top:1020px;width:6px;background:#01528f"></div>
<div class="b" style="left:937px;top:1020px;width:92px;background:#2389dd"><span class="l" style="left:7.7px">Csc (Mezi<s>...</s></span></div>
<div class="b" style="left:1029px;top:1020px;width:4px;background:#216eac"></div>
<div class="b" style="left:1039px;top:1020px;width:6px;background:#01528f"></div>
<div class="b" style="left:1050px;top:1020px;width:52px;background:#2389dd"></div>
<div class="b" style="left:1102px;top:1020px;width:3px;background:#01528f"></div>
<div class="b" style="left:1112px;top:1020px;width:6px;background:#216eac"></div>
<div class="b" style="left:1125px;top:1020px;width:74px;background:#2389dd"></div>
<div class="b" style="left:1212px;top:1020px;width:4px;background:#216eac"></div>
<div class="b" style="left:1222px;top:1020px;width:6px;background:#01528f"></div>
<div class="b" style="left:1235px;top:1020px;width:51px;background:#2389dd"></div>
<div class="b" style="left:1286px;top:1020px;width:5px;background:#01528f"></div>
<div class="b" style="left:1298px;top:1020px;width:6px;background:#216eac"></div>
<div class="b" style="left:1311px;top:1020px;width:87px;background:#2389dd"><span class="l" style="left:7.6px">Csc (Mezi<s>...</s></span></div>
<div class="b" style="left:1398px;top:1020px;width:4px;background:#216eac"></div>
<div class="b" style="left:1409px;top:1020px;width:6px;background:#01528f"></div>
<div class="b" style="left:1420px;top:1020px;width:53px;background:#2389dd"></div>
<div class="b" style="left:1473px;top:1020px;width:3px;background:#01528f"></div>
<div class="b" style="left:1483px;top:1020px;width:6px;background:#216eac"></div>
<div class="b" style="left:1498px;top:1020px;width:95px;background:#2389dd"><span class="l" style="left:7.3px">Csc (Mezia<s>...</s></span></div>
<div class="b" style="left:1593px;top:1020px;width:4px;background:#216eac"></div>
<div class="b" style="left:1603px;top:1020px;width:6px;background:#216eac"></div>
<div class="b" style="left:1616px;top:1020px;width:55px;background:#026fc5"></div>
<div class="b" style="left:1671px;top:1020px;width:4px;background:#01528f"></div>
<div class="b" style="left:1715px;top:1020px;width:5px;background:#216eac"></div>
<div class="b" style="left:1722px;top:1020px;width:6px;background:#2389dd"></div>
<div class="b" style="left:718px;top:1047px;width:3px;background:#216eac"></div>
<div class="b" style="left:738px;top:1047px;width:5px;background:#026fc5"></div>
<div class="b" style="left:743px;top:1047px;width:89px;background:#2389dd"><span class="l" style="left:7px">Csc (Mezi<s>...</s></span></div>
<div class="b" style="left:832px;top:1047px;width:3px;background:#01528f"></div>
<div class="b" style="left:843px;top:1047px;width:4px;background:#01528f"></div>
<div class="b" style="left:856px;top:1047px;width:58px;background:#2389dd"></div>
<div class="b" style="left:914px;top:1047px;width:3px;background:#216eac"></div>
<div class="b" style="left:926px;top:1047px;width:4px;background:#216eac"></div>
<div class="b" style="left:937px;top:1047px;width:6px;background:#2389dd"></div>
<div class="b" style="left:943px;top:1047px;width:86px;background:#026fc5"><span class="l" style="left:6px">Csc (Mezi<s>...</s></span></div>
<div class="b" style="left:1029px;top:1047px;width:3px;background:#216eac"></div>
<div class="b" style="left:1040px;top:1047px;width:4px;background:#216eac"></div>
<div class="b" style="left:1050px;top:1047px;width:50px;background:#026fc5"></div>
<div class="b" style="left:1100px;top:1047px;width:5px;background:#01528f"></div>
<div class="b" style="left:1114px;top:1047px;width:3px;background:#01528f"></div>
<div class="b" style="left:1126px;top:1047px;width:87px;background:#026fc5"><span class="l" style="left:11.9px">Csc (Mezi<s>...</s></span></div>
<div class="b" style="left:1213px;top:1047px;width:3px;background:#216eac"></div>
<div class="b" style="left:1224px;top:1047px;width:4px;background:#216eac"></div>
<div class="b" style="left:1236px;top:1047px;width:51px;background:#026fc5"></div>
<div class="b" style="left:1287px;top:1047px;width:4px;background:#01528f"></div>
<div class="b" style="left:1300px;top:1047px;width:4px;background:#01528f"></div>
<div class="b" style="left:1312px;top:1047px;width:87px;background:#026fc5"><span class="l" style="left:12.7px">Csc (Mez<s>...</s></span></div>
<div class="b" style="left:1399px;top:1047px;width:3px;background:#216eac"></div>
<div class="b" style="left:1411px;top:1047px;width:3px;background:#216eac"></div>
<div class="b" style="left:1421px;top:1047px;width:52px;background:#026fc5"></div>
<div class="b" style="left:1473px;top:1047px;width:3px;background:#216eac"></div>
<div class="b" style="left:1485px;top:1047px;width:3px;background:#01528f"></div>
<div class="b" style="left:1499px;top:1047px;width:6px;background:#2389dd"></div>
<div class="b" style="left:1505px;top:1047px;width:88px;background:#026fc5"><span class="l" style="left:6px">Csc (Mezi<s>...</s></span></div>
<div class="b" style="left:1593px;top:1047px;width:3px;background:#216eac"></div>
<div class="b" style="left:1605px;top:1047px;width:3px;background:#216eac"></div>
<div class="b" style="left:1617px;top:1047px;width:5px;background:#2389dd"></div>
<div class="b" style="left:1622px;top:1047px;width:49px;background:#026fc5"></div>
<div class="b" style="left:1671px;top:1047px;width:4px;background:#01528f"></div>
<div class="b" style="left:1716px;top:1047px;width:3px;background:#216eac"></div>
<div class="b" style="left:1722px;top:1047px;width:4px;background:#7a7a7a"></div>
<div class="b" style="left:735px;top:1074px;width:94px;background:#7a7a7a"><span class="l" style="left:6px">Meziantou.<s>...</s></span></div>
<div class="b" style="left:831px;top:1074px;width:3px;background:#216eac"></div>
<div class="b" style="left:856px;top:1074px;width:58px;background:#7a7a7a"></div>
<div class="b" style="left:938px;top:1074px;width:88px;background:#969696"><span class="l" style="left:5.9px">Meziantou.<s>...</s></span></div>
<div class="b" style="left:1029px;top:1074px;width:3px;background:#01528f"></div>
<div class="b" style="left:1050px;top:1074px;width:52px;background:#969696"></div>
<div class="b" style="left:1126px;top:1074px;width:69px;background:#7a7a7a"></div>
<div class="b" style="left:1213px;top:1074px;width:3px;background:#216eac"></div>
<div class="b" style="left:1236px;top:1074px;width:52px;background:#7a7a7a"></div>
<div class="b" style="left:1312px;top:1074px;width:85px;background:#969696"><span class="l" style="left:5.6px">Meziantou.<s>...</s></span></div>
<div class="b" style="left:1398px;top:1074px;width:4px;background:#01528f"></div>
<div class="b" style="left:1421px;top:1074px;width:51px;background:#969696"></div>
<div class="b" style="left:1473px;top:1074px;width:2px;background:#01528f"></div>
<div class="b" style="left:1498px;top:1074px;width:95px;background:#969696"><span class="l" style="left:6.4px">Meziantou.<s>...</s></span></div>
<div class="b" style="left:1616px;top:1074px;width:55px;background:#7a7a7a"></div>
<div class="b" style="left:1722px;top:1074px;width:6px;background:#216eac"></div>
<div class="b" style="left:735px;top:1101px;width:5px;background:#01528f"></div>
<div class="b" style="left:740px;top:1101px;width:92px;background:#216eac"><span class="l" style="left:3.7px">CoreComp<s>...</s></span></div>
<div class="b" style="left:856px;top:1101px;width:56px;background:#969696"></div>
<div class="b" style="left:914px;top:1101px;width:3px;background:#01528f"></div>
<div class="b" style="left:937px;top:1101px;width:6px;background:#01528f"></div>
<div class="b" style="left:943px;top:1101px;width:86px;background:#216eac"><span class="l" style="left:6px">CoreComp<s>...</s></span></div>
<div class="b" style="left:1051px;top:1101px;width:49px;background:#7a7a7a"></div>
<div class="b" style="left:1102px;top:1101px;width:3px;background:#216eac"></div>
<div class="b" style="left:1125px;top:1101px;width:74px;background:#216eac"></div>
<div class="b" style="left:1236px;top:1101px;width:50px;background:#7a7a7a"></div>
<div class="b" style="left:1288px;top:1101px;width:3px;background:#216eac"></div>
<div class="b" style="left:1311px;top:1101px;width:89px;background:#216eac"><span class="l" style="left:7.4px">CoreComp<s>...</s></span></div>
<div class="b" style="left:1420px;top:1101px;width:55px;background:#216eac"></div>
<div class="b" style="left:1500px;top:1101px;width:93px;background:#7a7a7a"><span class="l" style="left:5.6px">Meziantou.<s>...</s></span></div>
<div class="b" style="left:1593px;top:1101px;width:3px;background:#216eac"></div>
<div class="b" style="left:1616px;top:1101px;width:59px;background:#216eac"></div>
<div class="b" style="left:1725px;top:1101px;width:3px;background:#01528f"></div>
<div class="b" style="left:738px;top:1128px;width:94px;background:#7a7a7a"><span class="l" style="left:6.2px">Meziantou.<s>...</s></span></div>
<div class="b" style="left:856px;top:1128px;width:58px;background:#216eac"></div>
<div class="b" style="left:938px;top:1128px;width:91px;background:#7a7a7a"><span class="l" style="left:5.9px">Meziantou.<s>...</s></span></div>
<div class="b" style="left:1050px;top:1128px;width:52px;background:#216eac"></div>
<div class="b" style="left:1127px;top:1128px;width:86px;background:#7a7a7a"><span class="l" style="left:6.2px">Meziantou.<s>...</s></span></div>
<div class="b" style="left:1235px;top:1128px;width:53px;background:#01528f"></div>
<div class="b" style="left:1312px;top:1128px;width:87px;background:#969696"><span class="l" style="left:6.4px">Meziantou.<s>...</s></span></div>
<div class="b" style="left:1422px;top:1128px;width:51px;background:#7a7a7a"></div>
<div class="b" style="left:1498px;top:1128px;width:95px;background:#216eac"><span class="l" style="left:7.3px">CoreCompi<s>...</s></span></div>
<div class="b" style="left:1617px;top:1128px;width:54px;background:#7a7a7a"></div>
<div class="b" style="left:738px;top:1155px;width:5px;background:#01528f"></div>
<div class="b" style="left:743px;top:1155px;width:88px;background:#216eac"><span class="l" style="left:7px">CoreComp<s>...</s></span></div>
<div class="b" style="left:856px;top:1155px;width:59px;background:#216eac"></div>
<div class="b" style="left:937px;top:1155px;width:92px;background:#01528f"><span class="l" style="left:7.7px">CoreComp <s>...</s></span></div>
<div class="b" style="left:1025px;top:1155px;width:4px;background:#216eac"></div>
<div class="b" style="left:1050px;top:1155px;width:53px;background:#216eac"></div>
<div class="b" style="left:1126px;top:1155px;width:5px;background:#01528f"></div>
<div class="b" style="left:1131px;top:1155px;width:82px;background:#216eac"><span class="l" style="left:6.4px">CoreCom<s>...</s></span></div>
<div class="b" style="left:1235px;top:1155px;width:54px;background:#216eac"></div>
<div class="b" style="left:1312px;top:1155px;width:6px;background:#01528f"></div>
<div class="b" style="left:1318px;top:1155px;width:80px;background:#216eac"><span class="l" style="left:6.2px">CoreCom<s>...</s></span></div>
<div class="b" style="left:1421px;top:1155px;width:4px;background:#01528f"></div>
<div class="b" style="left:1425px;top:1155px;width:47px;background:#216eac"></div>
<div class="b" style="left:1499px;top:1155px;width:5px;background:#216eac"></div>
<div class="b" style="left:1504px;top:1155px;width:89px;background:#01528f"><span class="l" style="left:7px">CoreComp<s>...</s></span></div>
<div class="b" style="left:1593px;top:1155px;width:3px;background:#216eac"></div>
<div class="b" style="left:1617px;top:1155px;width:4px;background:#01528f"></div>
<div class="b" style="left:1621px;top:1155px;width:53px;background:#216eac"></div>
<div class="b" style="left:828px;top:1182px;width:4px;background:#01528f"></div>
<div class="b" style="left:911px;top:1182px;width:3px;background:#216eac"></div>
<div class="b" style="left:1026px;top:1182px;width:3px;background:#01528f"></div>
<div class="b" style="left:1099px;top:1182px;width:3px;background:#216eac"></div>
<div class="b" style="left:1195px;top:1182px;width:3px;background:#01528f"></div>
<div class="b" style="left:1285px;top:1182px;width:3px;background:#216eac"></div>
<div class="b" style="left:1397px;top:1182px;width:3px;background:#01528f"></div>
<div class="b" style="left:1472px;top:1182px;width:3px;background:#216eac"></div>
<div class="b" style="left:1593px;top:1182px;width:3px;background:#01528f"></div>
<div class="b" style="left:1671px;top:1182px;width:3px;background:#216eac"></div>
<div class="b" style="left:1808px;top:1233px;width:476px;background:#2a923d"><span class="l" style="left:6.5px">validate_nuget</span></div>
<div class="b" style="left:1816px;top:1260px;width:81px;background:#2a923d"></div>
<div class="b" style="left:1897px;top:1260px;width:7px;background:#4aad5c"></div>
<div class="b" style="left:1904px;top:1260px;width:380px;background:#2a923d"><span class="l" style="left:6.6px">Run dotnet validate</span></div>
<div class="b" style="left:1819px;top:1287px;width:4px;background:#b8962a"></div>
<div class="b" style="left:1832px;top:1287px;width:4px;background:#b8962a"></div>
<div class="b" style="left:1836px;top:1287px;width:4px;background:#a27d00"></div>
<div class="b" style="left:1899px;top:1287px;width:3px;background:#b8962a"></div>
<div class="b" style="left:1906px;top:1287px;width:4px;background:#a27d00"></div>
</div>
<div class="a" style="left:291px;top:348px;width:1406px;height:3px;background:#2a923d"></div>
</div></body></html>
